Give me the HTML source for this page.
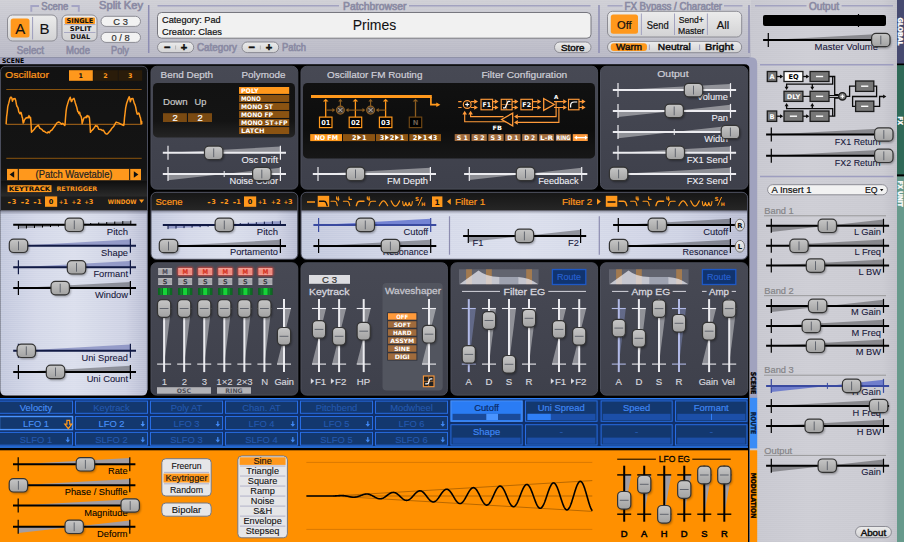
<!DOCTYPE html>
<html lang="en"><head><meta charset="utf-8"><title>Surge - Primes</title>
<style>html,body{margin:0;padding:0;background:#000;overflow:hidden}body{width:904px;height:542px;font-family:"Liberation Sans",sans-serif}svg text{white-space:pre}</style>
</head><body>
<svg width="904" height="542" viewBox="0 0 904 542" style="display:block">
<defs>
<linearGradient id="hg" x1="0" y1="0" x2="0" y2="1"><stop offset="0" stop-color="#c6c6c6"/><stop offset="0.5" stop-color="#b4b4b4"/><stop offset="1" stop-color="#a2a2a2"/></linearGradient>
<linearGradient id="topg" x1="0" y1="0" x2="0" y2="1"><stop offset="0" stop-color="#cfcfd5"/><stop offset="1" stop-color="#b8b8c5"/></linearGradient>
<linearGradient id="pg" x1="0" y1="0" x2="0" y2="1"><stop offset="0" stop-color="#474954"/><stop offset="1" stop-color="#3e404b"/></linearGradient>
<linearGradient id="lg" x1="0" y1="0" x2="1" y2="0"><stop offset="0" stop-color="#c2c8dd"/><stop offset="0.25" stop-color="#d3d7e8"/><stop offset="0.5" stop-color="#dadeec"/><stop offset="0.85" stop-color="#cdd1e3"/><stop offset="1" stop-color="#b8bcd2"/></linearGradient>
<linearGradient id="btn" x1="0" y1="0" x2="0" y2="1"><stop offset="0" stop-color="#ececec"/><stop offset="1" stop-color="#d2d2d4"/></linearGradient>
<linearGradient id="disp" x1="0" y1="0" x2="0" y2="1"><stop offset="0" stop-color="#121212"/><stop offset="0.7" stop-color="#141414"/><stop offset="1" stop-color="#242424"/></linearGradient>
<linearGradient id="hdr" x1="0" y1="0" x2="0" y2="1"><stop offset="0" stop-color="#161616"/><stop offset="1" stop-color="#262626"/></linearGradient>
<linearGradient id="rp" x1="0" y1="0" x2="1" y2="0"><stop offset="0" stop-color="#c7c7cf"/><stop offset="0.4" stop-color="#cdcdd4"/><stop offset="0.9" stop-color="#cacad1"/><stop offset="1" stop-color="#c0c0c8"/></linearGradient>
<pattern id="stripes" width="4" height="2" patternUnits="userSpaceOnUse"><rect width="4" height="1" fill="rgba(255,255,255,0.10)"/></pattern>
<pattern id="stripes2" width="4" height="2" patternUnits="userSpaceOnUse"><rect width="4" height="1" fill="rgba(255,255,255,0.06)"/></pattern>
<linearGradient id="tbfade" x1="0" y1="0" x2="1" y2="0"><stop offset="0" stop-color="#c4c4ce" stop-opacity="0"/><stop offset="1" stop-color="#c9c9d1" stop-opacity="0"/></linearGradient>
<linearGradient id="hdr2" x1="0" y1="0" x2="0" y2="1"><stop offset="0" stop-color="#0f0f0f"/><stop offset="1" stop-color="#2c2c2c"/></linearGradient>
<linearGradient id="shtop" x1="0" y1="0" x2="0" y2="1"><stop offset="0" stop-color="rgba(0,0,20,0.35)"/><stop offset="1" stop-color="rgba(0,0,20,0)"/></linearGradient>
<linearGradient id="mb" x1="0" y1="0" x2="0" y2="1"><stop offset="0" stop-color="#c4c4c8"/><stop offset="0.3" stop-color="#a6a6ab"/><stop offset="0.75" stop-color="#a6a6ab"/><stop offset="1" stop-color="#bcbcc0"/></linearGradient>
<linearGradient id="mr" x1="0" y1="0" x2="0" y2="1"><stop offset="0" stop-color="#f8b0a6"/><stop offset="0.3" stop-color="#ee8c80"/><stop offset="0.75" stop-color="#ee8c80"/><stop offset="1" stop-color="#f6a69c"/></linearGradient>
<linearGradient id="disp2" x1="0" y1="0" x2="0" y2="1"><stop offset="0" stop-color="#111"/><stop offset="0.6" stop-color="#0d0d0d"/><stop offset="1" stop-color="#171717"/></linearGradient>
<filter id="blur" x="-30%" y="-30%" width="160%" height="160%"><feGaussianBlur stdDeviation="1"/></filter>
<filter id="glow" x="-30%" y="-50%" width="160%" height="200%"><feGaussianBlur stdDeviation="1.2"/></filter>
</defs>
<rect x="0" y="0" width="904" height="542" fill="#000" />
<rect x="749.5" y="0" width="147.5" height="542" fill="url(#rp)" />
<rect x="749.5" y="0" width="147.5" height="542" fill="url(#stripes2)" />
<rect x="0" y="0" width="751" height="57.5" fill="url(#topg)" />
<rect x="0" y="0" width="751" height="57.5" fill="url(#stripes2)" />
<rect x="748" y="0" width="12" height="57.5" fill="url(#tbfade)" />
<path d="M0 57.3 H751 Q757.2 57.3 757.2 63.5 V398 H749.8 V69.8 Q749.8 64.3 744.3 64.3 H0 Z" stroke="none" stroke-width="0" fill="#a0a2be" />
<rect x="897" y="0" width="7" height="542" fill="#000" />
<rect x="897" y="0" width="7" height="63.5" fill="#464a70" />
<rect x="897" y="65.2" width="7" height="109.2" fill="#2f6a58" />
<rect x="897" y="176.4" width="7" height="365.6" fill="#679a8c" />
<text transform="translate(898.1 17.6) rotate(90)" font-size="6.5" fill="#fff" font-family="DejaVu Sans, Liberation Sans, sans-serif" font-weight="bold" stroke="#fff" stroke-width="0.35" textLength="28" lengthAdjust="spacingAndGlyphs">GLOBAL</text>
<text transform="translate(898.1 116.6) rotate(90)" font-size="6.5" fill="#fff" font-family="DejaVu Sans, Liberation Sans, sans-serif" font-weight="bold" stroke="#fff" stroke-width="0.35" textLength="8.2" lengthAdjust="spacingAndGlyphs">FX</text>
<text transform="translate(898.1 180.8) rotate(90)" font-size="6.5" fill="#fff" font-family="DejaVu Sans, Liberation Sans, sans-serif" font-weight="bold" stroke="#fff" stroke-width="0.35" textLength="26" lengthAdjust="spacingAndGlyphs">FX UNIT</text>
<text x="2" y="62.9" font-size="6.5" fill="#000" font-family="DejaVu Sans, Liberation Sans, sans-serif" font-weight="bold" textLength="22.1" lengthAdjust="spacingAndGlyphs" >SCENE</text>
<text transform="translate(751 371.7) rotate(90)" font-size="6.8" fill="#000" font-family="DejaVu Sans, Liberation Sans, sans-serif" font-weight="bold" stroke="#000" stroke-width="0.35" textLength="22.6" lengthAdjust="spacingAndGlyphs">SCENE</text>
<path d="M31.3 11.8 V6 H39" stroke="#a4a4c4" stroke-width="1.9" fill="none" />
<path d="M71.5 6 H78.8 V11.8" stroke="#a4a4c4" stroke-width="1.9" fill="none" />
<text x="41.3" y="9.6" font-size="10.2" fill="#8a8aa3" font-family="Liberation Sans, sans-serif" textLength="27" lengthAdjust="spacingAndGlyphs" stroke="#8a8aa3" stroke-width="0.6" >Scene</text>
<rect x="7.5" y="15" width="49.5" height="26" fill="url(#btn)" rx="5" stroke="#8c8c94" stroke-width="1" />
<rect x="10.7" y="18.4" width="18.8" height="19.2" fill="#ff981c" rx="2.5" />
<line x1="32.6" y1="17" x2="32.6" y2="39.5" stroke="#9c9cbc" stroke-width="1" />
<text x="20.3" y="33.8" font-size="15" fill="#111" font-family="Liberation Sans, sans-serif" text-anchor="middle" stroke="#111" stroke-width="0.1" >A</text>
<text x="44.6" y="33.8" font-size="15" fill="#111" font-family="Liberation Sans, sans-serif" text-anchor="middle" stroke="#111" stroke-width="0.1" >B</text>
<text x="16.7" y="53.7" font-size="10.2" fill="#8a8aa3" font-family="Liberation Sans, sans-serif" textLength="27.3" lengthAdjust="spacingAndGlyphs" stroke="#8a8aa3" stroke-width="0.6" >Select</text>
<rect x="62" y="15" width="35" height="26" fill="url(#btn)" rx="5" stroke="#8c8c94" stroke-width="1" />
<rect x="64.8" y="17.4" width="30.2" height="6.6" fill="#ff981c" rx="1" />
<line x1="64" y1="24.6" x2="95.5" y2="24.6" stroke="#9c9cbc" stroke-width="0.8" />
<line x1="64" y1="32.5" x2="95.5" y2="32.5" stroke="#9c9cbc" stroke-width="0.8" />
<text x="66.6" y="23.3" font-size="6.6" fill="#111" font-family="DejaVu Sans, Liberation Sans, sans-serif" font-weight="bold" textLength="26.6" lengthAdjust="spacingAndGlyphs" >SINGLE</text>
<text x="69.8" y="31.2" font-size="6.6" fill="#111" font-family="DejaVu Sans, Liberation Sans, sans-serif" font-weight="bold" textLength="21.6" lengthAdjust="spacingAndGlyphs" >SPLIT</text>
<text x="70.6" y="39.1" font-size="6.6" fill="#111" font-family="DejaVu Sans, Liberation Sans, sans-serif" font-weight="bold" textLength="19.4" lengthAdjust="spacingAndGlyphs" >DUAL</text>
<text x="66" y="53.7" font-size="10.2" fill="#8a8aa3" font-family="Liberation Sans, sans-serif" textLength="24" lengthAdjust="spacingAndGlyphs" stroke="#8a8aa3" stroke-width="0.6" >Mode</text>
<text x="99" y="9.4" font-size="10.2" fill="#8a8aa3" font-family="Liberation Sans, sans-serif" textLength="44" lengthAdjust="spacingAndGlyphs" stroke="#8a8aa3" stroke-width="0.6" >Split Key</text>
<rect x="101" y="16.3" width="39.5" height="10.1" fill="#f2f2f2" rx="5.05" stroke="#8c8c94" stroke-width="1" />
<rect x="101" y="32.4" width="39.5" height="10" fill="#f2f2f2" rx="5" stroke="#8c8c94" stroke-width="1" />
<text x="120.6" y="24.6" font-size="9.3" fill="#333" font-family="Liberation Sans, sans-serif" text-anchor="middle" stroke="#333" stroke-width="0.2" >C 3</text>
<text x="120.6" y="40.7" font-size="9.3" fill="#333" font-family="Liberation Sans, sans-serif" text-anchor="middle" stroke="#333" stroke-width="0.2" >0 / 8</text>
<text x="111" y="53.7" font-size="10.2" fill="#8a8aa3" font-family="Liberation Sans, sans-serif" textLength="18" lengthAdjust="spacingAndGlyphs" stroke="#8a8aa3" stroke-width="0.6" >Poly</text>
<line x1="148.7" y1="5" x2="148.7" y2="53" stroke="#8c8cb2" stroke-width="1.5" />
<line x1="157.5" y1="5.8" x2="339" y2="5.8" stroke="#a2a2c0" stroke-width="1.4" />
<line x1="409" y1="5.8" x2="590.5" y2="5.8" stroke="#a2a2c0" stroke-width="1.4" />
<text x="343" y="9.7" font-size="10" fill="#8a8aa3" font-family="Liberation Sans, sans-serif" textLength="63.5" lengthAdjust="spacingAndGlyphs" stroke="#8a8aa3" stroke-width="0.6" >Patchbrowser</text>
<rect x="157.5" y="12.5" width="433.5" height="25.7" fill="#f1f1f1" rx="4" stroke="#77777f" stroke-width="1" />
<text x="162" y="22.6" font-size="9.3" fill="#111" font-family="Liberation Sans, sans-serif" textLength="58.7" lengthAdjust="spacingAndGlyphs" stroke="#111" stroke-width="0.2" >Category: Pad</text>
<text x="162" y="34.6" font-size="9.3" fill="#111" font-family="Liberation Sans, sans-serif" textLength="60" lengthAdjust="spacingAndGlyphs" stroke="#111" stroke-width="0.2" >Creator: Claes</text>
<text x="374.5" y="30.3" font-size="14" fill="#111" font-family="Liberation Sans, sans-serif" text-anchor="middle" textLength="43.5" lengthAdjust="spacingAndGlyphs" stroke="#111" stroke-width="0.08" >Primes</text>
<rect x="157.5" y="42" width="36.2" height="10.6" fill="url(#btn)" rx="5.3" stroke="#8c8c94" stroke-width="1" />
<text x="167.2" y="51.1" font-size="11" fill="#111" font-family="Liberation Sans, sans-serif" text-anchor="middle" font-weight="bold" stroke="#111" stroke-width="0.5">−</text>
<text x="183.9" y="51.2" font-size="11" fill="#111" font-family="Liberation Sans, sans-serif" text-anchor="middle" font-weight="bold" stroke="#111" stroke-width="0.5">+</text>
<line x1="175.6" y1="45.5" x2="175.6" y2="49.5" stroke="#aaa" stroke-width="0.8" />
<text x="197" y="51.3" font-size="10" fill="#8a8aa3" font-family="Liberation Sans, sans-serif" textLength="40" lengthAdjust="spacingAndGlyphs" stroke="#8a8aa3" stroke-width="0.6" >Category</text>
<rect x="242" y="42" width="36.7" height="10.6" fill="url(#btn)" rx="5.3" stroke="#8c8c94" stroke-width="1" />
<text x="251.7" y="51.1" font-size="11" fill="#111" font-family="Liberation Sans, sans-serif" text-anchor="middle" font-weight="bold" stroke="#111" stroke-width="0.5">−</text>
<text x="268.9" y="51.2" font-size="11" fill="#111" font-family="Liberation Sans, sans-serif" text-anchor="middle" font-weight="bold" stroke="#111" stroke-width="0.5">+</text>
<line x1="260.35" y1="45.5" x2="260.35" y2="49.5" stroke="#aaa" stroke-width="0.8" />
<text x="282" y="51.3" font-size="10" fill="#8a8aa3" font-family="Liberation Sans, sans-serif" textLength="24" lengthAdjust="spacingAndGlyphs" stroke="#8a8aa3" stroke-width="0.6" >Patch</text>
<rect x="554.5" y="42" width="36.5" height="10.6" fill="url(#btn)" rx="5.3" stroke="#8c8c94" stroke-width="1" />
<text x="572.8" y="50.9" font-size="9.6" fill="#111" font-family="Liberation Sans, sans-serif" text-anchor="middle" textLength="23.5" lengthAdjust="spacingAndGlyphs" stroke="#111" stroke-width="0.45" >Store</text>
<line x1="599" y1="5" x2="599" y2="53" stroke="#8c8cb2" stroke-width="1.5" />
<line x1="607.5" y1="5.8" x2="622.6" y2="5.8" stroke="#a2a2c0" stroke-width="1.4" />
<line x1="724" y1="5.8" x2="742.5" y2="5.8" stroke="#a2a2c0" stroke-width="1.4" />
<text x="624.5" y="9.7" font-size="10" fill="#8a8aa3" font-family="Liberation Sans, sans-serif" textLength="97.5" lengthAdjust="spacingAndGlyphs" stroke="#8a8aa3" stroke-width="0.6" >FX Bypass / Character</text>
<rect x="607.5" y="11.3" width="134.2" height="25.7" fill="url(#btn)" rx="5" stroke="#8c8c94" stroke-width="1" />
<rect x="610.8" y="14.5" width="27.2" height="19.3" fill="#ff981c" rx="2.5" />
<line x1="641.4" y1="13.5" x2="641.4" y2="35" stroke="#9c9cbc" stroke-width="0.9" />
<line x1="674.5" y1="13.5" x2="674.5" y2="35" stroke="#9c9cbc" stroke-width="0.9" />
<line x1="707.4" y1="13.5" x2="707.4" y2="35" stroke="#9c9cbc" stroke-width="0.9" />
<text x="624.3" y="28.6" font-size="11.2" fill="#111" font-family="Liberation Sans, sans-serif" text-anchor="middle" stroke="#111" stroke-width="0.2" >Off</text>
<text x="657.8" y="28.6" font-size="11" fill="#111" font-family="Liberation Sans, sans-serif" text-anchor="middle" textLength="22" lengthAdjust="spacingAndGlyphs" stroke="#111" stroke-width="0.2" >Send</text>
<text x="691.2" y="22.8" font-size="9.2" fill="#111" font-family="Liberation Sans, sans-serif" text-anchor="middle" textLength="25" lengthAdjust="spacingAndGlyphs" stroke="#111" stroke-width="0.2" >Send+</text>
<text x="691.2" y="33.8" font-size="9.2" fill="#111" font-family="Liberation Sans, sans-serif" text-anchor="middle" textLength="26.5" lengthAdjust="spacingAndGlyphs" stroke="#111" stroke-width="0.2" >Master</text>
<text x="723" y="28.6" font-size="11.2" fill="#111" font-family="Liberation Sans, sans-serif" text-anchor="middle" stroke="#111" stroke-width="0.2" >All</text>
<rect x="607.5" y="41.4" width="134.2" height="11.3" fill="url(#btn)" rx="5.65" stroke="#8c8c94" stroke-width="1" />
<rect x="610.8" y="43.2" width="36.2" height="7.8" fill="#ff981c" rx="3" />
<line x1="649.4" y1="44.5" x2="649.4" y2="50" stroke="#9c9cbc" stroke-width="0.9" />
<line x1="699.6" y1="44.5" x2="699.6" y2="50" stroke="#9c9cbc" stroke-width="0.9" />
<text x="629" y="50.4" font-size="9.8" fill="#111" font-family="Liberation Sans, sans-serif" text-anchor="middle" textLength="26" lengthAdjust="spacingAndGlyphs" stroke="#111" stroke-width="0.45" >Warm</text>
<text x="674.3" y="50.4" font-size="9.8" fill="#111" font-family="Liberation Sans, sans-serif" text-anchor="middle" textLength="33" lengthAdjust="spacingAndGlyphs" stroke="#111" stroke-width="0.45" >Neutral</text>
<text x="719.3" y="50.4" font-size="9.8" fill="#111" font-family="Liberation Sans, sans-serif" text-anchor="middle" textLength="28.5" lengthAdjust="spacingAndGlyphs" stroke="#111" stroke-width="0.45" >Bright</text>
<line x1="749" y1="5" x2="749" y2="53" stroke="#8c8cb2" stroke-width="1.5" />
<line x1="755" y1="5.8" x2="806.5" y2="5.8" stroke="#a2a2c0" stroke-width="1.4" />
<line x1="841.6" y1="5.8" x2="893" y2="5.8" stroke="#a2a2c0" stroke-width="1.4" />
<text x="809" y="9.7" font-size="10" fill="#8a8aa3" font-family="Liberation Sans, sans-serif" textLength="30" lengthAdjust="spacingAndGlyphs" stroke="#8a8aa3" stroke-width="0.6" >Output</text>
<rect x="763" y="15" width="123" height="11" fill="#000" rx="2" />
<line x1="858.5" y1="14" x2="858.5" y2="27" stroke="#000" stroke-width="1.2" />
<polygon points="768.3,40 884,33.8 884,40" fill="rgba(0,0,0,0.33)" />
<line x1="763.1" y1="40" x2="889.6" y2="40" stroke="#000" stroke-width="2" />
<line x1="768.3" y1="33" x2="768.3" y2="47" stroke="#000" stroke-width="1.2" />
<text x="878" y="50" font-size="9.3" fill="#16163a" font-family="Liberation Sans, sans-serif" text-anchor="end" textLength="63.5" lengthAdjust="spacingAndGlyphs" stroke="#16163a" stroke-width="0.08" >Master Volume</text>
<rect x="872.8" y="34.9" width="18.4" height="13.4" fill="rgba(0,0,0,0.35)" rx="4.5" filter="url(#blur)"/>
<rect x="871.6" y="33.3" width="18.4" height="13.4" fill="url(#hg)" rx="4.3" stroke="#333" stroke-width="1.2" />
<line x1="880.8" y1="35.6" x2="880.8" y2="44.4" stroke="#585c66" stroke-width="0.9" />
<line x1="760" y1="64.7" x2="893.5" y2="64.7" stroke="#9e9ec0" stroke-width="1.5" />
<line x1="776.7" y1="76.5" x2="782" y2="76.5" stroke="#0a0a0a" stroke-width="1.3" />
<polygon points="783.2,76.5 780,74.5 780,78.5" fill="#0a0a0a" />
<line x1="802.9" y1="76.5" x2="808.1" y2="76.5" stroke="#0a0a0a" stroke-width="1.3" />
<polygon points="809.3,76.5 806.1,74.5 806.1,78.5" fill="#0a0a0a" />
<line x1="776.7" y1="116.2" x2="782" y2="116.2" stroke="#0a0a0a" stroke-width="1.3" />
<polygon points="783.2,116.2 780,114.2 780,118.2" fill="#0a0a0a" />
<line x1="802.9" y1="116.2" x2="808.1" y2="116.2" stroke="#0a0a0a" stroke-width="1.3" />
<polygon points="809.3,116.2 806.1,114.2 806.1,118.2" fill="#0a0a0a" />
<line x1="802.9" y1="96.35" x2="810.1" y2="96.35" stroke="#0a0a0a" stroke-width="1.2" />
<path d="M829 76.5 H834.7 V94.6 H838.8 M829 116.2 H834.7 V98.2 H838.8" stroke="#0a0a0a" stroke-width="1.3" fill="none" />
<line x1="829" y1="95.5" x2="838.8" y2="95.5" stroke="#0a0a0a" stroke-width="1" />
<line x1="829" y1="97.4" x2="838.8" y2="97.4" stroke="#0a0a0a" stroke-width="1" />
<path d="M832.7 76.5 V84.2 H786.6 V87 M812.3 84.2 V87" stroke="#0a0a0a" stroke-width="1.3" fill="none" />
<polygon points="786.6,90 784.6,86.8 788.6,86.8" fill="#0a0a0a" />
<polygon points="812.3,90 810.3,86.8 814.3,86.8" fill="#0a0a0a" />
<path d="M832.7 116.2 V108.6 H786.6 V106 M812.3 108.6 V106" stroke="#0a0a0a" stroke-width="1.3" fill="none" />
<polygon points="786.6,103 784.6,106.2 788.6,106.2" fill="#0a0a0a" />
<polygon points="812.3,103 810.3,106.2 814.3,106.2" fill="#0a0a0a" />
<path d="M846 96.3 H849.6 V86.2 H855.6 M873.8 86.2 H876.6 V96.5 H852.6 V106.3 H855.6 M873.8 106.3 H879.6 V96.5 H883.5" stroke="#0a0a0a" stroke-width="1.3" fill="none" />
<polygon points="886.3,96.5 883.1,94.5 883.1,98.5" fill="#0a0a0a" />
<circle cx="842.4" cy="96.3" r="3.7" fill="#7c7c7c" stroke="#1a1a1a" stroke-width="1.3"/>
<line x1="840.5" y1="96.3" x2="844.3" y2="96.3" stroke="#fff" stroke-width="1.1" />
<line x1="842.4" y1="94.4" x2="842.4" y2="98.2" stroke="#fff" stroke-width="1.1" />
<rect x="767.3" y="71.5" width="9.4" height="10" fill="#777" stroke="#1c1c1c" stroke-width="1.3" />
<text x="772" y="79" font-size="6.6" fill="#fff" font-family="DejaVu Sans, Liberation Sans, sans-serif" text-anchor="middle" font-weight="bold" >A</text>
<rect x="784" y="71.5" width="18.9" height="10" fill="#fff" stroke="#1c1c1c" stroke-width="1.3" />
<text x="793.45" y="79" font-size="6.6" fill="#000" font-family="DejaVu Sans, Liberation Sans, sans-serif" text-anchor="middle" font-weight="bold" >EQ</text>
<rect x="810.1" y="71.5" width="18.9" height="10" fill="#777" stroke="#1c1c1c" stroke-width="1.3" />
<rect x="815.95" y="75.8" width="7.2" height="1.4" fill="#fff" />
<rect x="784" y="91.3" width="18.9" height="10.1" fill="#777" stroke="#1c1c1c" stroke-width="1.3" />
<text x="793.45" y="98.85" font-size="6.6" fill="#fff" font-family="DejaVu Sans, Liberation Sans, sans-serif" text-anchor="middle" font-weight="bold" >DLY</text>
<rect x="810.1" y="91.3" width="18.9" height="10.1" fill="#777" stroke="#1c1c1c" stroke-width="1.3" />
<rect x="815.95" y="95.65" width="7.2" height="1.4" fill="#fff" />
<rect x="767.3" y="111" width="9.4" height="10.4" fill="#777" stroke="#1c1c1c" stroke-width="1.3" />
<text x="772" y="118.7" font-size="6.6" fill="#fff" font-family="DejaVu Sans, Liberation Sans, sans-serif" text-anchor="middle" font-weight="bold" >B</text>
<rect x="784" y="111" width="18.9" height="10.4" fill="#777" stroke="#1c1c1c" stroke-width="1.3" />
<rect x="789.85" y="115.5" width="7.2" height="1.4" fill="#fff" />
<rect x="810.1" y="111" width="18.9" height="10.4" fill="#777" stroke="#1c1c1c" stroke-width="1.3" />
<rect x="815.95" y="115.5" width="7.2" height="1.4" fill="#fff" />
<rect x="855.6" y="81" width="18.2" height="10.4" fill="#777" stroke="#1c1c1c" stroke-width="1.3" />
<rect x="861.1" y="85.5" width="7.2" height="1.4" fill="#fff" />
<rect x="855.6" y="101.1" width="18.2" height="10.4" fill="#777" stroke="#1c1c1c" stroke-width="1.3" />
<rect x="861.1" y="105.6" width="7.2" height="1.4" fill="#fff" />
<polygon points="771.3,134.5 887,128.3 887,134.5" fill="rgba(0,0,0,0.33)" />
<line x1="766.1" y1="134.5" x2="892.6" y2="134.5" stroke="#000" stroke-width="2" />
<line x1="771.3" y1="127.5" x2="771.3" y2="141.5" stroke="#000" stroke-width="1.2" />
<text x="880.4" y="145" font-size="9.3" fill="#16163a" font-family="Liberation Sans, sans-serif" text-anchor="end" textLength="45.6" lengthAdjust="spacingAndGlyphs" stroke="#16163a" stroke-width="0.08" >FX1 Return</text>
<rect x="875.8" y="129.4" width="18.4" height="13.4" fill="rgba(0,0,0,0.35)" rx="4.5" filter="url(#blur)"/>
<rect x="874.6" y="127.8" width="18.4" height="13.4" fill="url(#hg)" rx="4.3" stroke="#333" stroke-width="1.2" />
<line x1="883.8" y1="130.1" x2="883.8" y2="138.9" stroke="#585c66" stroke-width="0.9" />
<polygon points="771.3,155.8 887,149.6 887,155.8" fill="rgba(0,0,0,0.33)" />
<line x1="766.1" y1="155.8" x2="892.6" y2="155.8" stroke="#000" stroke-width="2" />
<line x1="771.3" y1="148.8" x2="771.3" y2="162.8" stroke="#000" stroke-width="1.2" />
<text x="880.4" y="166.4" font-size="9.3" fill="#16163a" font-family="Liberation Sans, sans-serif" text-anchor="end" textLength="45.6" lengthAdjust="spacingAndGlyphs" stroke="#16163a" stroke-width="0.08" >FX2 Return</text>
<rect x="875.8" y="150.7" width="18.4" height="13.4" fill="rgba(0,0,0,0.35)" rx="4.5" filter="url(#blur)"/>
<rect x="874.6" y="149.1" width="18.4" height="13.4" fill="url(#hg)" rx="4.3" stroke="#333" stroke-width="1.2" />
<line x1="883.8" y1="151.4" x2="883.8" y2="160.2" stroke="#585c66" stroke-width="0.9" />
<line x1="760" y1="176.4" x2="893.5" y2="176.4" stroke="#9e9ec0" stroke-width="1.5" />
<rect x="767.6" y="184.7" width="119.8" height="10.1" fill="#f2f2f2" rx="5.05" stroke="#8c8c94" stroke-width="1" />
<text x="771.5" y="192.8" font-size="9.6" fill="#111" font-family="Liberation Sans, sans-serif" textLength="40" lengthAdjust="spacingAndGlyphs" stroke="#111" stroke-width="0.2" >A Insert 1</text>
<text x="865" y="192.8" font-size="9.6" fill="#111" font-family="Liberation Sans, sans-serif" textLength="12.6" lengthAdjust="spacingAndGlyphs" stroke="#111" stroke-width="0.2" >EQ</text>
<polygon points="880,189 883.4,189 881.7,191.2" fill="#111" />
<text x="764.3" y="213.9" font-size="9.3" fill="#858588" font-family="Liberation Sans, sans-serif" stroke="#858588" stroke-width="0.2" >Band 1</text>
<line x1="764" y1="215.8" x2="886" y2="215.8" stroke="#8a8a8a" stroke-width="0.8" />
<text x="764.3" y="293.8" font-size="9.3" fill="#858588" font-family="Liberation Sans, sans-serif" stroke="#858588" stroke-width="0.2" >Band 2</text>
<line x1="764" y1="295.7" x2="886" y2="295.7" stroke="#8a8a8a" stroke-width="0.8" />
<text x="764.3" y="373.3" font-size="9.3" fill="#858588" font-family="Liberation Sans, sans-serif" stroke="#858588" stroke-width="0.2" >Band 3</text>
<line x1="764" y1="375.2" x2="886" y2="375.2" stroke="#8a8a8a" stroke-width="0.8" />
<text x="764.3" y="453.5" font-size="9.3" fill="#858588" font-family="Liberation Sans, sans-serif" stroke="#858588" stroke-width="0.2" >Output</text>
<line x1="764" y1="455.4" x2="886" y2="455.4" stroke="#8a8a8a" stroke-width="0.8" />
<polygon points="771.3,225.8 771.3,232 827.4,225.8" fill="rgba(0,0,0,0.33)" />
<polygon points="827.4,225.8 883.5,219.6 883.5,225.8" fill="rgba(0,0,0,0.33)" />
<line x1="766.1" y1="225.8" x2="889.1" y2="225.8" stroke="#000" stroke-width="2" />
<line x1="771.3" y1="218.8" x2="771.3" y2="232.8" stroke="#000" stroke-width="1.2" />
<line x1="883.5" y1="218.8" x2="883.5" y2="232.8" stroke="#000" stroke-width="1.2" />
<text x="881" y="235.3" font-size="9.3" fill="#16163a" font-family="Liberation Sans, sans-serif" text-anchor="end" stroke="#16163a" stroke-width="0.08" >L Gain</text>
<rect x="819.3" y="220.7" width="18.4" height="13.4" fill="rgba(0,0,0,0.35)" rx="4.5" filter="url(#blur)"/>
<rect x="818.1" y="219.1" width="18.4" height="13.4" fill="url(#hg)" rx="4.3" stroke="#333" stroke-width="1.2" />
<line x1="827.3" y1="221.4" x2="827.3" y2="230.2" stroke="#585c66" stroke-width="0.9" />
<polygon points="771.3,245.8 883.5,239.6 883.5,245.8" fill="rgba(0,0,0,0.33)" />
<line x1="766.1" y1="245.8" x2="889.1" y2="245.8" stroke="#000" stroke-width="2" />
<line x1="771.3" y1="238.8" x2="771.3" y2="252.8" stroke="#000" stroke-width="1.2" />
<line x1="883.5" y1="238.8" x2="883.5" y2="252.8" stroke="#000" stroke-width="1.2" />
<text x="881" y="255.3" font-size="9.3" fill="#16163a" font-family="Liberation Sans, sans-serif" text-anchor="end" stroke="#16163a" stroke-width="0.08" >L Freq</text>
<rect x="791" y="240.7" width="18.4" height="13.4" fill="rgba(0,0,0,0.35)" rx="4.5" filter="url(#blur)"/>
<rect x="789.8" y="239.1" width="18.4" height="13.4" fill="url(#hg)" rx="4.3" stroke="#333" stroke-width="1.2" />
<line x1="799" y1="241.4" x2="799" y2="250.2" stroke="#585c66" stroke-width="0.9" />
<polygon points="771.3,265.6 883.5,259.4 883.5,265.6" fill="rgba(0,0,0,0.33)" />
<line x1="766.1" y1="265.6" x2="889.1" y2="265.6" stroke="#000" stroke-width="2" />
<line x1="771.3" y1="258.6" x2="771.3" y2="272.6" stroke="#000" stroke-width="1.2" />
<line x1="883.5" y1="258.6" x2="883.5" y2="272.6" stroke="#000" stroke-width="1.2" />
<text x="881" y="275.1" font-size="9.3" fill="#16163a" font-family="Liberation Sans, sans-serif" text-anchor="end" stroke="#16163a" stroke-width="0.08" >L BW</text>
<rect x="807.5" y="260.5" width="18.4" height="13.4" fill="rgba(0,0,0,0.35)" rx="4.5" filter="url(#blur)"/>
<rect x="806.3" y="258.9" width="18.4" height="13.4" fill="url(#hg)" rx="4.3" stroke="#333" stroke-width="1.2" />
<line x1="815.5" y1="261.2" x2="815.5" y2="270" stroke="#585c66" stroke-width="0.9" />
<polygon points="771.3,305.9 771.3,312.1 827.4,305.9" fill="rgba(0,0,0,0.33)" />
<polygon points="827.4,305.9 883.5,299.7 883.5,305.9" fill="rgba(0,0,0,0.33)" />
<line x1="766.1" y1="305.9" x2="889.1" y2="305.9" stroke="#000" stroke-width="2" />
<line x1="771.3" y1="298.9" x2="771.3" y2="312.9" stroke="#000" stroke-width="1.2" />
<line x1="883.5" y1="298.9" x2="883.5" y2="312.9" stroke="#000" stroke-width="1.2" />
<text x="881" y="315.4" font-size="9.3" fill="#16163a" font-family="Liberation Sans, sans-serif" text-anchor="end" stroke="#16163a" stroke-width="0.08" >M Gain</text>
<rect x="809.6" y="300.8" width="18.4" height="13.4" fill="rgba(0,0,0,0.35)" rx="4.5" filter="url(#blur)"/>
<rect x="808.4" y="299.2" width="18.4" height="13.4" fill="url(#hg)" rx="4.3" stroke="#333" stroke-width="1.2" />
<line x1="817.6" y1="301.5" x2="817.6" y2="310.3" stroke="#585c66" stroke-width="0.9" />
<polygon points="771.3,326 883.5,319.8 883.5,326" fill="rgba(0,0,0,0.33)" />
<line x1="766.1" y1="326" x2="889.1" y2="326" stroke="#000" stroke-width="2" />
<line x1="771.3" y1="319" x2="771.3" y2="333" stroke="#000" stroke-width="1.2" />
<line x1="883.5" y1="319" x2="883.5" y2="333" stroke="#000" stroke-width="1.2" />
<text x="881" y="335.5" font-size="9.3" fill="#16163a" font-family="Liberation Sans, sans-serif" text-anchor="end" stroke="#16163a" stroke-width="0.08" >M Freq</text>
<rect x="803.3" y="320.9" width="18.4" height="13.4" fill="rgba(0,0,0,0.35)" rx="4.5" filter="url(#blur)"/>
<rect x="802.1" y="319.3" width="18.4" height="13.4" fill="url(#hg)" rx="4.3" stroke="#333" stroke-width="1.2" />
<line x1="811.3" y1="321.6" x2="811.3" y2="330.4" stroke="#585c66" stroke-width="0.9" />
<polygon points="771.3,345.8 883.5,339.6 883.5,345.8" fill="rgba(0,0,0,0.33)" />
<line x1="766.1" y1="345.8" x2="889.1" y2="345.8" stroke="#000" stroke-width="2" />
<line x1="771.3" y1="338.8" x2="771.3" y2="352.8" stroke="#000" stroke-width="1.2" />
<line x1="883.5" y1="338.8" x2="883.5" y2="352.8" stroke="#000" stroke-width="1.2" />
<text x="881" y="355.3" font-size="9.3" fill="#16163a" font-family="Liberation Sans, sans-serif" text-anchor="end" stroke="#16163a" stroke-width="0.08" >M BW</text>
<rect x="807.5" y="340.7" width="18.4" height="13.4" fill="rgba(0,0,0,0.35)" rx="4.5" filter="url(#blur)"/>
<rect x="806.3" y="339.1" width="18.4" height="13.4" fill="url(#hg)" rx="4.3" stroke="#333" stroke-width="1.2" />
<line x1="815.5" y1="341.4" x2="815.5" y2="350.2" stroke="#585c66" stroke-width="0.9" />
<polygon points="771.3,385.9 771.3,392.1 827.4,385.9" fill="rgba(70,90,200,0.68)" />
<polygon points="827.4,385.9 883.5,379.7 883.5,385.9" fill="rgba(70,90,200,0.68)" />
<line x1="766.1" y1="385.9" x2="889.1" y2="385.9" stroke="#3a4aa0" stroke-width="2" />
<line x1="771.3" y1="378.9" x2="771.3" y2="392.9" stroke="#3a4aa0" stroke-width="1.2" />
<line x1="883.5" y1="378.9" x2="883.5" y2="392.9" stroke="#3a4aa0" stroke-width="1.2" />
<line x1="827.4" y1="382.9" x2="827.4" y2="388.9" stroke="#3a4aa0" stroke-width="1" />
<text x="881" y="395.4" font-size="9.3" fill="#16163a" font-family="Liberation Sans, sans-serif" text-anchor="end" stroke="#16163a" stroke-width="0.08" >H Gain</text>
<rect x="843.6" y="380.8" width="18.4" height="13.4" fill="rgba(0,0,0,0.35)" rx="4.5" filter="url(#blur)"/>
<rect x="842.4" y="379.2" width="18.4" height="13.4" fill="url(#hg)" rx="4.3" stroke="#333" stroke-width="1.2" />
<line x1="851.6" y1="381.5" x2="851.6" y2="390.3" stroke="#585c66" stroke-width="0.9" />
<polygon points="771.3,406 883.5,399.8 883.5,406" fill="rgba(0,0,0,0.33)" />
<line x1="766.1" y1="406" x2="889.1" y2="406" stroke="#000" stroke-width="2" />
<line x1="771.3" y1="399" x2="771.3" y2="413" stroke="#000" stroke-width="1.2" />
<line x1="883.5" y1="399" x2="883.5" y2="413" stroke="#000" stroke-width="1.2" />
<text x="881" y="415.5" font-size="9.3" fill="#16163a" font-family="Liberation Sans, sans-serif" text-anchor="end" stroke="#16163a" stroke-width="0.08" >H Freq</text>
<rect x="870.6" y="400.9" width="18.4" height="13.4" fill="rgba(0,0,0,0.35)" rx="4.5" filter="url(#blur)"/>
<rect x="869.4" y="399.3" width="18.4" height="13.4" fill="url(#hg)" rx="4.3" stroke="#333" stroke-width="1.2" />
<line x1="878.6" y1="401.6" x2="878.6" y2="410.4" stroke="#585c66" stroke-width="0.9" />
<polygon points="771.3,425.9 883.5,419.7 883.5,425.9" fill="rgba(0,0,0,0.33)" />
<line x1="766.1" y1="425.9" x2="889.1" y2="425.9" stroke="#000" stroke-width="2" />
<line x1="771.3" y1="418.9" x2="771.3" y2="432.9" stroke="#000" stroke-width="1.2" />
<line x1="883.5" y1="418.9" x2="883.5" y2="432.9" stroke="#000" stroke-width="1.2" />
<text x="881" y="435.4" font-size="9.3" fill="#16163a" font-family="Liberation Sans, sans-serif" text-anchor="end" stroke="#16163a" stroke-width="0.08" >H BW</text>
<rect x="806.2" y="420.8" width="18.4" height="13.4" fill="rgba(0,0,0,0.35)" rx="4.5" filter="url(#blur)"/>
<rect x="805" y="419.2" width="18.4" height="13.4" fill="url(#hg)" rx="4.3" stroke="#333" stroke-width="1.2" />
<line x1="814.2" y1="421.5" x2="814.2" y2="430.3" stroke="#585c66" stroke-width="0.9" />
<polygon points="771.3,465.7 771.3,471.9 827.4,465.7" fill="rgba(0,0,0,0.33)" />
<polygon points="827.4,465.7 883.5,459.5 883.5,465.7" fill="rgba(0,0,0,0.33)" />
<line x1="766.1" y1="465.7" x2="889.1" y2="465.7" stroke="#000" stroke-width="2" />
<line x1="771.3" y1="458.7" x2="771.3" y2="472.7" stroke="#000" stroke-width="1.2" />
<line x1="883.5" y1="458.7" x2="883.5" y2="472.7" stroke="#000" stroke-width="1.2" />
<text x="881" y="475.2" font-size="9.3" fill="#16163a" font-family="Liberation Sans, sans-serif" text-anchor="end" stroke="#16163a" stroke-width="0.08" >Gain</text>
<rect x="819.3" y="460.6" width="18.4" height="13.4" fill="rgba(0,0,0,0.35)" rx="4.5" filter="url(#blur)"/>
<rect x="818.1" y="459" width="18.4" height="13.4" fill="url(#hg)" rx="4.3" stroke="#333" stroke-width="1.2" />
<line x1="827.3" y1="461.3" x2="827.3" y2="470.1" stroke="#585c66" stroke-width="0.9" />
<rect x="855.5" y="526.5" width="35.9" height="11.2" fill="url(#btn)" rx="5.6" stroke="#8c8c94" stroke-width="1" />
<text x="873.4" y="535.6" font-size="9.6" fill="#111" font-family="Liberation Sans, sans-serif" text-anchor="middle" textLength="25.5" lengthAdjust="spacingAndGlyphs" stroke="#111" stroke-width="0.45" >About</text>
<rect x="0.3" y="66" width="147.2" height="329.6" fill="#101010" rx="5.5" />
<path d="M0.3 71.5 Q0.3 66 5.8 66 H142 Q147.5 66 147.5 71.5 V210.5 H0.3 Z" stroke="none" stroke-width="0" fill="url(#disp)" />
<rect x="0.3" y="181" width="147" height="16" fill="url(#hdr2)" />
<rect x="0.3" y="196.5" width="147" height="14.2" fill="#1c1c1c" />
<path d="M0.3 210.6 H147.3 V390 Q147.3 395.5 141.8 395.5 H5.8 Q0.3 395.5 0.3 390 Z" stroke="none" stroke-width="0" fill="url(#lg)" />
<path d="M0.3 210.6 H147.3 V390 Q147.3 395.5 141.8 395.5 H5.8 Q0.3 395.5 0.3 390 Z" stroke="none" stroke-width="0" fill="url(#stripes)" />
<rect x="0.3" y="210.6" width="147" height="4" fill="url(#shtop)" />
<path d="M0.5 210.6 V71.8 Q0.5 66.3 6 66.3 H142 Q147.5 66.3 147.5 71.8 V210.6" stroke="#4a4d5c" stroke-width="1" fill="none" />
<line x1="147.2" y1="210.6" x2="147.2" y2="390" stroke="#8a8ea8" stroke-width="0.8" />
<text x="5" y="78.1" font-size="9.6" fill="#ff981c" font-family="Liberation Sans, sans-serif" textLength="44" lengthAdjust="spacingAndGlyphs" stroke="#ff981c" stroke-width="0.2" >Oscillator</text>
<rect x="69" y="70.2" width="23.8" height="10.6" fill="#ff981c" />
<rect x="93.3" y="70.2" width="24.6" height="10.6" fill="#2a1c0a" />
<rect x="118.4" y="70.2" width="23.8" height="10.6" fill="#2a1c0a" />
<text x="80.8" y="78.2" font-size="6.4" fill="#111" font-family="DejaVu Sans, Liberation Sans, sans-serif" text-anchor="middle" font-weight="bold" >1</text>
<text x="105.6" y="78.2" font-size="6.4" fill="#ff981c" font-family="DejaVu Sans, Liberation Sans, sans-serif" text-anchor="middle" font-weight="bold" >2</text>
<text x="130.2" y="78.2" font-size="6.4" fill="#ff981c" font-family="DejaVu Sans, Liberation Sans, sans-serif" text-anchor="middle" font-weight="bold" >3</text>
<line x1="6.3" y1="89.5" x2="141.7" y2="89.5" stroke="#a8640e" stroke-width="0.8" />
<line x1="6.3" y1="158.3" x2="141.7" y2="158.3" stroke="#a8640e" stroke-width="0.8" />
<line x1="6.3" y1="124.3" x2="141.7" y2="124.3" stroke="#d8801a" stroke-width="0.8" />
<polyline points="6.1,124.3 6.6,116.92 7.18,112.58 7.76,106.62 8.75,103.14 9.75,99.14 10.49,97.31 11.24,97.17 11.82,98.19 12.4,101.14 13.4,98.73 14.23,98.93 15.06,98.56 15.72,100.48 16.38,104.24 17.05,106.49 17.71,107.25 18.21,108.71 18.7,111.59 19.86,113.74 20.28,113.71 20.69,112.35 21.19,112.88 21.69,114.89 22.1,117.22 22.52,117.9 22.85,120.79 23.18,123.07 23.76,122.24 24.34,120.1 25.01,119.19 25.67,118.2 27.33,117.49 28.16,117.92 28.99,115.64 29.73,117.67 30.48,117.34 30.81,120.45 31.14,125.69 31.47,132.2 32.63,131 34.29,129.24 35.54,127.34 36.78,126.27 38.44,125.26 39.77,128.16 41.76,129.31 43.41,131.22 44.41,131.13 45.4,132.33 46.32,132.66 47.23,132.95 48.22,131.78 49.22,132.8 50.46,130.77 51.71,130.28 54.19,126.86 55.02,125.75 55.85,124.34 57.18,122.65 58.34,122.09 59.5,122.28 61.66,124.11 62.73,123.29 63.81,124.42 64.31,125.09 64.81,125.46 65.06,124.3 65.55,117.29 66.13,110.9 66.71,107.1 67.71,103.66 68.7,100.39 70.2,97.29 71.36,101.49 71.85,101.29 72.35,99.65 74.01,98.35 74.67,100.49 75.34,103.01 76.66,106.94 77.16,108.95 77.66,111.39 78.24,111.86 78.82,113.48 79.23,112.32 79.65,112.33 80.15,114.99 80.64,115.67 81.06,116.11 81.47,117.78 81.8,119.59 82.14,123.63 83.3,119.77 83.96,117.92 84.62,117.61 85.45,117.05 86.28,117.63 87.11,115.43 87.94,116.8 88.69,116.08 89.43,117.89 89.77,121.72 90.1,126.13 90.43,132.37 91.01,131.33 91.59,130.8 93.25,129.15 95.74,125.55 96.56,126.35 97.39,125.97 98.72,129.2 100.71,129.44 101.54,129.98 102.37,130.56 103.36,130.2 104.36,131.78 105.27,133.26 106.18,134.06 107.18,134.06 108.17,133.11 110.66,130.24 111.9,128.23 113.15,127.02 113.98,125.95 114.81,124.36 116.13,122.11 118.45,122.89 119.53,123.39 120.61,124.04 122.77,125.15 123.26,124.29 123.76,125.46 124.01,124.3 124.51,117.57 125.09,112.97 125.67,107.88 126.66,103.23 127.66,100.38 129.15,96.81 129.73,98.35 130.31,101.81 131.31,98.76 132.97,98.6 134.29,103.36 134.96,104.6 135.62,106.87 136.61,112.07 137.19,114.15 137.77,114.09 138.6,112.98 139.1,113.37 139.6,115.22 140.01,116.98 140.43,117.66 140.76,119.61 141.09,123.71 141.67,121.37 141.8,124.3" fill="none" stroke="#ff981c" stroke-width="1.5" stroke-linejoin="round"/>
<rect x="7" y="168.9" width="134" height="11.3" fill="#ff981c" />
<line x1="18.3" y1="168.9" x2="18.3" y2="180.2" stroke="#111" stroke-width="1" />
<line x1="129.7" y1="168.9" x2="129.7" y2="180.2" stroke="#111" stroke-width="1" />
<polygon points="9.6,174.5 14.2,171.3 14.2,177.7" fill="#111" />
<polygon points="138.4,174.5 133.8,171.3 133.8,177.7" fill="#111" />
<text x="74" y="178.3" font-size="10.2" fill="#222" font-family="Liberation Sans, sans-serif" text-anchor="middle" textLength="77" lengthAdjust="spacingAndGlyphs" stroke="#222" stroke-width="0.2" >(Patch Wavetable)</text>
<rect x="7.5" y="185.2" width="44" height="6.9" fill="#ff981c" />
<text x="8.8" y="191.2" font-size="6.3" fill="#111" font-family="DejaVu Sans, Liberation Sans, sans-serif" font-weight="bold" textLength="41.4" lengthAdjust="spacingAndGlyphs" >KEYTRACK</text>
<text x="56.4" y="191.2" font-size="6.3" fill="#ff981c" font-family="DejaVu Sans, Liberation Sans, sans-serif" font-weight="bold" textLength="40.9" lengthAdjust="spacingAndGlyphs" >RETRIGGER</text>
<text x="9.2" y="204.8" font-size="8.2" fill="#ff981c" font-family="DejaVu Sans, Liberation Sans, sans-serif" text-anchor="middle" font-weight="bold" >-</text>
<text x="14.1" y="204.2" font-size="6.6" fill="#ff981c" font-family="DejaVu Sans, Liberation Sans, sans-serif" text-anchor="middle" font-weight="bold" >3</text>
<text x="22.5" y="204.8" font-size="8.2" fill="#ff981c" font-family="DejaVu Sans, Liberation Sans, sans-serif" text-anchor="middle" font-weight="bold" >-</text>
<text x="27.1" y="204.2" font-size="6.6" fill="#ff981c" font-family="DejaVu Sans, Liberation Sans, sans-serif" text-anchor="middle" font-weight="bold" >2</text>
<text x="35" y="204.8" font-size="8.2" fill="#ff981c" font-family="DejaVu Sans, Liberation Sans, sans-serif" text-anchor="middle" font-weight="bold" >-</text>
<text x="39.2" y="204.2" font-size="6.6" fill="#ff981c" font-family="DejaVu Sans, Liberation Sans, sans-serif" text-anchor="middle" font-weight="bold" >1</text>
<rect x="45" y="196.4" width="12.2" height="10.4" fill="#ff981c" />
<text x="51.1" y="204.2" font-size="6.6" fill="#111" font-family="DejaVu Sans, Liberation Sans, sans-serif" text-anchor="middle" font-weight="bold" >0</text>
<text x="61.1" y="204.3" font-size="5.6" fill="#ff981c" font-family="DejaVu Sans, Liberation Sans, sans-serif" text-anchor="middle" font-weight="bold" >+</text>
<text x="65.5" y="204.2" font-size="6.6" fill="#ff981c" font-family="DejaVu Sans, Liberation Sans, sans-serif" text-anchor="middle" font-weight="bold" >1</text>
<text x="73.9" y="204.3" font-size="5.6" fill="#ff981c" font-family="DejaVu Sans, Liberation Sans, sans-serif" text-anchor="middle" font-weight="bold" >+</text>
<text x="78.8" y="204.2" font-size="6.6" fill="#ff981c" font-family="DejaVu Sans, Liberation Sans, sans-serif" text-anchor="middle" font-weight="bold" >2</text>
<text x="86.5" y="204.3" font-size="5.6" fill="#ff981c" font-family="DejaVu Sans, Liberation Sans, sans-serif" text-anchor="middle" font-weight="bold" >+</text>
<text x="91.1" y="204.2" font-size="6.6" fill="#ff981c" font-family="DejaVu Sans, Liberation Sans, sans-serif" text-anchor="middle" font-weight="bold" >3</text>
<text x="107.8" y="204.2" font-size="6.3" fill="#ff981c" font-family="DejaVu Sans, Liberation Sans, sans-serif" font-weight="bold" textLength="28.7" lengthAdjust="spacingAndGlyphs" >WINDOW</text>
<polygon points="139,199.6 144.2,199.6 141.6,203" fill="#ff981c" />
<rect x="18.4" y="224.8" width="8.03" height="3.6" fill="rgba(0,0,0,0.33)" />
<rect x="122.77" y="221.2" width="8.03" height="3.6" fill="rgba(0,0,0,0.33)" />
<rect x="26.43" y="224.8" width="8.03" height="3.09" fill="rgba(0,0,0,0.33)" />
<rect x="114.74" y="221.71" width="8.03" height="3.09" fill="rgba(0,0,0,0.33)" />
<rect x="34.46" y="224.8" width="8.03" height="2.57" fill="rgba(0,0,0,0.33)" />
<rect x="106.71" y="222.23" width="8.03" height="2.57" fill="rgba(0,0,0,0.33)" />
<rect x="42.49" y="224.8" width="8.03" height="2.06" fill="rgba(0,0,0,0.33)" />
<rect x="98.69" y="222.74" width="8.03" height="2.06" fill="rgba(0,0,0,0.33)" />
<rect x="50.51" y="224.8" width="8.03" height="1.54" fill="rgba(0,0,0,0.33)" />
<rect x="90.66" y="223.26" width="8.03" height="1.54" fill="rgba(0,0,0,0.33)" />
<rect x="58.54" y="224.8" width="8.03" height="1.03" fill="rgba(0,0,0,0.33)" />
<rect x="82.63" y="223.77" width="8.03" height="1.03" fill="rgba(0,0,0,0.33)" />
<rect x="66.57" y="224.8" width="8.03" height="0.51" fill="rgba(0,0,0,0.33)" />
<rect x="74.6" y="224.29" width="8.03" height="0.51" fill="rgba(0,0,0,0.33)" />
<line x1="18.4" y1="224.8" x2="18.4" y2="229" stroke="#000" stroke-width="1" />
<line x1="130.8" y1="224.8" x2="130.8" y2="220.6" stroke="#000" stroke-width="1" />
<line x1="26.43" y1="224.8" x2="26.43" y2="228.51" stroke="#000" stroke-width="1" />
<line x1="122.77" y1="224.8" x2="122.77" y2="221.09" stroke="#000" stroke-width="1" />
<line x1="34.46" y1="224.8" x2="34.46" y2="228.03" stroke="#000" stroke-width="1" />
<line x1="114.74" y1="224.8" x2="114.74" y2="221.57" stroke="#000" stroke-width="1" />
<line x1="42.49" y1="224.8" x2="42.49" y2="227.54" stroke="#000" stroke-width="1" />
<line x1="106.71" y1="224.8" x2="106.71" y2="222.06" stroke="#000" stroke-width="1" />
<line x1="50.51" y1="224.8" x2="50.51" y2="227.06" stroke="#000" stroke-width="1" />
<line x1="98.69" y1="224.8" x2="98.69" y2="222.54" stroke="#000" stroke-width="1" />
<line x1="58.54" y1="224.8" x2="58.54" y2="226.57" stroke="#000" stroke-width="1" />
<line x1="90.66" y1="224.8" x2="90.66" y2="223.03" stroke="#000" stroke-width="1" />
<line x1="66.57" y1="224.8" x2="66.57" y2="226.09" stroke="#000" stroke-width="1" />
<line x1="82.63" y1="224.8" x2="82.63" y2="223.51" stroke="#000" stroke-width="1" />
<line x1="13.2" y1="224.8" x2="136.4" y2="224.8" stroke="#000" stroke-width="2" />
<text x="128" y="234.8" font-size="9.3" fill="#16163a" font-family="Liberation Sans, sans-serif" text-anchor="end" textLength="21.2" lengthAdjust="spacingAndGlyphs" stroke="#16163a" stroke-width="0.08" >Pitch</text>
<rect x="66.3" y="219.7" width="18.4" height="13.4" fill="rgba(0,0,0,0.35)" rx="4.5" filter="url(#blur)"/>
<rect x="65.1" y="218.1" width="18.4" height="13.4" fill="url(#hg)" rx="4.3" stroke="#333" stroke-width="1.2" />
<line x1="74.3" y1="220.4" x2="74.3" y2="229.2" stroke="#585c66" stroke-width="0.9" />
<polygon points="18.4,245.8 130.4,239.6 130.4,245.8" fill="rgba(85,95,170,0.5)" />
<line x1="13.2" y1="245.8" x2="136" y2="245.8" stroke="#111a44" stroke-width="2" />
<line x1="130.4" y1="238.8" x2="130.4" y2="252.8" stroke="#111a44" stroke-width="1.2" />
<text x="128" y="256.2" font-size="9.3" fill="#16163a" font-family="Liberation Sans, sans-serif" text-anchor="end" stroke="#16163a" stroke-width="0.08" >Shape</text>
<rect x="10.5" y="240.7" width="18.4" height="13.4" fill="rgba(0,0,0,0.35)" rx="4.5" filter="url(#blur)"/>
<rect x="9.3" y="239.1" width="18.4" height="13.4" fill="url(#hg)" rx="4.3" stroke="#333" stroke-width="1.2" />
<line x1="18.5" y1="241.4" x2="18.5" y2="250.2" stroke="#585c66" stroke-width="0.9" />
<polygon points="18.4,267.3 130.4,261.1 130.4,267.3" fill="rgba(85,95,170,0.5)" />
<line x1="13.2" y1="267.3" x2="136" y2="267.3" stroke="#111a44" stroke-width="2" />
<line x1="18.4" y1="260.3" x2="18.4" y2="274.3" stroke="#111a44" stroke-width="1.2" />
<line x1="130.4" y1="260.3" x2="130.4" y2="274.3" stroke="#111a44" stroke-width="1.2" />
<text x="128" y="276.8" font-size="9.3" fill="#16163a" font-family="Liberation Sans, sans-serif" text-anchor="end" stroke="#16163a" stroke-width="0.08" >Formant</text>
<rect x="68.5" y="262.2" width="18.4" height="13.4" fill="rgba(0,0,0,0.35)" rx="4.5" filter="url(#blur)"/>
<rect x="67.3" y="260.6" width="18.4" height="13.4" fill="url(#hg)" rx="4.3" stroke="#333" stroke-width="1.2" />
<line x1="76.5" y1="262.9" x2="76.5" y2="271.7" stroke="#585c66" stroke-width="0.9" />
<polygon points="18.4,288.1 130.4,281.9 130.4,288.1" fill="rgba(0,0,0,0.33)" />
<line x1="13.2" y1="288.1" x2="136" y2="288.1" stroke="#000" stroke-width="2" />
<line x1="18.4" y1="281.1" x2="18.4" y2="295.1" stroke="#000" stroke-width="1.2" />
<line x1="130.4" y1="281.1" x2="130.4" y2="295.1" stroke="#000" stroke-width="1.2" />
<text x="128" y="297.9" font-size="9.3" fill="#16163a" font-family="Liberation Sans, sans-serif" text-anchor="end" stroke="#16163a" stroke-width="0.08" >Window</text>
<rect x="52.2" y="283" width="18.4" height="13.4" fill="rgba(0,0,0,0.35)" rx="4.5" filter="url(#blur)"/>
<rect x="51" y="281.4" width="18.4" height="13.4" fill="url(#hg)" rx="4.3" stroke="#333" stroke-width="1.2" />
<line x1="60.2" y1="283.7" x2="60.2" y2="292.5" stroke="#585c66" stroke-width="0.9" />
<polygon points="18.4,350.8 130.4,344.6 130.4,350.8" fill="rgba(85,95,170,0.5)" />
<line x1="13.2" y1="350.8" x2="136" y2="350.8" stroke="#111a44" stroke-width="2" />
<line x1="18.4" y1="343.8" x2="18.4" y2="357.8" stroke="#111a44" stroke-width="1.2" />
<line x1="130.4" y1="343.8" x2="130.4" y2="357.8" stroke="#111a44" stroke-width="1.2" />
<text x="128" y="360.8" font-size="9.3" fill="#16163a" font-family="Liberation Sans, sans-serif" text-anchor="end" stroke="#16163a" stroke-width="0.08" >Uni Spread</text>
<rect x="18.3" y="345.7" width="18.4" height="13.4" fill="rgba(0,0,0,0.35)" rx="4.5" filter="url(#blur)"/>
<rect x="17.1" y="344.1" width="18.4" height="13.4" fill="url(#hg)" rx="4.3" stroke="#333" stroke-width="1.2" />
<line x1="26.3" y1="346.4" x2="26.3" y2="355.2" stroke="#585c66" stroke-width="0.9" />
<polygon points="18.4,371.9 130.4,365.7 130.4,371.9" fill="rgba(0,0,0,0.33)" />
<line x1="13.2" y1="371.9" x2="136" y2="371.9" stroke="#000" stroke-width="2" />
<line x1="18.4" y1="364.9" x2="18.4" y2="378.9" stroke="#000" stroke-width="1.2" />
<line x1="130.4" y1="364.9" x2="130.4" y2="378.9" stroke="#000" stroke-width="1.2" />
<text x="128" y="382.2" font-size="9.3" fill="#16163a" font-family="Liberation Sans, sans-serif" text-anchor="end" stroke="#16163a" stroke-width="0.08" >Uni Count</text>
<rect x="47.5" y="366.8" width="18.4" height="13.4" fill="rgba(0,0,0,0.35)" rx="4.5" filter="url(#blur)"/>
<rect x="46.3" y="365.2" width="18.4" height="13.4" fill="url(#hg)" rx="4.3" stroke="#333" stroke-width="1.2" />
<line x1="55.5" y1="367.5" x2="55.5" y2="376.3" stroke="#585c66" stroke-width="0.9" />
<rect x="151" y="66.3" width="146.8" height="122.8" fill="url(#pg)" rx="5.5" stroke="#4c4f5b" stroke-width="1" />
<rect x="153" y="83" width="142" height="54.4" fill="url(#disp)" rx="4.5" />
<text x="160.5" y="77.6" font-size="9.6" fill="#cfcfd8" font-family="Liberation Sans, sans-serif" textLength="52.5" lengthAdjust="spacingAndGlyphs" stroke="#cfcfd8" stroke-width="0.2" >Bend Depth</text>
<text x="241.5" y="77.6" font-size="9.6" fill="#cfcfd8" font-family="Liberation Sans, sans-serif" textLength="43.9" lengthAdjust="spacingAndGlyphs" stroke="#cfcfd8" stroke-width="0.2" >Polymode</text>
<text x="163" y="104.8" font-size="9.4" fill="#c8c8c8" font-family="Liberation Sans, sans-serif" textLength="24.6" lengthAdjust="spacingAndGlyphs" stroke="#c8c8c8" stroke-width="0.2" >Down</text>
<text x="194.6" y="104.8" font-size="9.4" fill="#c8c8c8" font-family="Liberation Sans, sans-serif" textLength="11.8" lengthAdjust="spacingAndGlyphs" stroke="#c8c8c8" stroke-width="0.2" >Up</text>
<rect x="163" y="113.2" width="23.9" height="8.8" fill="#7a4a12" />
<rect x="188" y="113.2" width="24" height="8.8" fill="#7a4a12" />
<text x="175" y="121" font-size="9.4" fill="#fff" font-family="Liberation Sans, sans-serif" text-anchor="middle" stroke="#fff" stroke-width="0.2" >2</text>
<text x="200" y="121" font-size="9.4" fill="#fff" font-family="Liberation Sans, sans-serif" text-anchor="middle" stroke="#fff" stroke-width="0.2" >2</text>
<rect x="239" y="87" width="50.2" height="6.9" fill="#ff981c" />
<text x="241" y="93.2" font-size="6.3" fill="#fff" font-family="DejaVu Sans, Liberation Sans, sans-serif" font-weight="bold" textLength="17.4" lengthAdjust="spacingAndGlyphs" >POLY</text>
<rect x="239" y="95.02" width="50.2" height="6.9" fill="#8b5312" />
<text x="241" y="101.22" font-size="6.3" fill="#fff" font-family="DejaVu Sans, Liberation Sans, sans-serif" font-weight="bold" textLength="19.8" lengthAdjust="spacingAndGlyphs" >MONO</text>
<rect x="239" y="103.04" width="50.2" height="6.9" fill="#8b5312" />
<text x="241" y="109.24" font-size="6.3" fill="#fff" font-family="DejaVu Sans, Liberation Sans, sans-serif" font-weight="bold" textLength="32" lengthAdjust="spacingAndGlyphs" >MONO ST</text>
<rect x="239" y="111.06" width="50.2" height="6.9" fill="#8b5312" />
<text x="241" y="117.26" font-size="6.3" fill="#fff" font-family="DejaVu Sans, Liberation Sans, sans-serif" font-weight="bold" textLength="32" lengthAdjust="spacingAndGlyphs" >MONO FP</text>
<rect x="239" y="119.08" width="50.2" height="6.9" fill="#8b5312" />
<text x="241" y="125.28" font-size="6.3" fill="#fff" font-family="DejaVu Sans, Liberation Sans, sans-serif" font-weight="bold" textLength="46.6" lengthAdjust="spacingAndGlyphs" >MONO ST+FP</text>
<rect x="239" y="127.1" width="50.2" height="6.9" fill="#8b5312" />
<text x="241" y="133.3" font-size="6.3" fill="#fff" font-family="DejaVu Sans, Liberation Sans, sans-serif" font-weight="bold" textLength="23.6" lengthAdjust="spacingAndGlyphs" >LATCH</text>
<polygon points="168,152.8 280.4,146.6 280.4,152.8" fill="rgba(255,255,255,0.41)" />
<line x1="162.8" y1="152.8" x2="286" y2="152.8" stroke="#ececf0" stroke-width="2" />
<line x1="168" y1="145.8" x2="168" y2="159.8" stroke="#ececf0" stroke-width="1.2" />
<line x1="280.4" y1="145.8" x2="280.4" y2="159.8" stroke="#ececf0" stroke-width="1.2" />
<text x="278" y="162.9" font-size="9.3" fill="#f0f0f6" font-family="Liberation Sans, sans-serif" text-anchor="end" textLength="36.4" lengthAdjust="spacingAndGlyphs" stroke="#f0f0f6" stroke-width="0.08" >Osc Drift</text>
<rect x="205.7" y="147.7" width="18.4" height="13.4" fill="rgba(0,0,0,0.35)" rx="4.5" filter="url(#blur)"/>
<rect x="204.5" y="146.1" width="18.4" height="13.4" fill="url(#hg)" rx="4.3" stroke="#333" stroke-width="1.2" />
<line x1="213.7" y1="148.4" x2="213.7" y2="157.2" stroke="#585c66" stroke-width="0.9" />
<polygon points="168,174 168,180.2 224.2,174" fill="rgba(255,255,255,0.41)" />
<polygon points="224.2,174 280.4,167.8 280.4,174" fill="rgba(255,255,255,0.41)" />
<line x1="162.8" y1="174" x2="286" y2="174" stroke="#ececf0" stroke-width="2" />
<line x1="168" y1="167" x2="168" y2="181" stroke="#ececf0" stroke-width="1.2" />
<line x1="280.4" y1="167" x2="280.4" y2="181" stroke="#ececf0" stroke-width="1.2" />
<line x1="224.2" y1="171" x2="224.2" y2="177" stroke="#ececf0" stroke-width="1" />
<text x="278" y="184" font-size="9.3" fill="#f0f0f6" font-family="Liberation Sans, sans-serif" text-anchor="end" stroke="#f0f0f6" stroke-width="0.08" >Noise Color</text>
<rect x="253.8" y="168.9" width="18.4" height="13.4" fill="rgba(0,0,0,0.35)" rx="4.5" filter="url(#blur)"/>
<rect x="252.6" y="167.3" width="18.4" height="13.4" fill="url(#hg)" rx="4.3" stroke="#333" stroke-width="1.2" />
<line x1="261.8" y1="169.6" x2="261.8" y2="178.4" stroke="#585c66" stroke-width="0.9" />
<rect x="301" y="66.3" width="296.6" height="122.8" fill="url(#pg)" rx="5.5" stroke="#4c4f5b" stroke-width="1" />
<rect x="303" y="83" width="292" height="75.4" fill="url(#disp2)" rx="4.5" />
<text x="327" y="77.6" font-size="9.6" fill="#cfcfd8" font-family="Liberation Sans, sans-serif" textLength="95.4" lengthAdjust="spacingAndGlyphs" stroke="#cfcfd8" stroke-width="0.2" >Oscillator FM Routing</text>
<text x="481.4" y="77.6" font-size="9.6" fill="#cfcfd8" font-family="Liberation Sans, sans-serif" textLength="85.8" lengthAdjust="spacingAndGlyphs" stroke="#cfcfd8" stroke-width="0.2" >Filter Configuration</text>
<rect x="311" y="95" width="120.8" height="3" fill="#ff981c" />
<path d="M430.9 97 V104.7 H437" stroke="#ff981c" stroke-width="1.7" fill="none" />
<polygon points="440.4,104.7 436.3,102.4 436.3,107" fill="#ff981c" />
<line x1="325.7" y1="117.2" x2="325.7" y2="101.3" stroke="#ff981c" stroke-width="1.3" />
<polygon points="325.7,98.8 322.9,101.6 328.5,101.6" fill="#ff981c" />
<rect x="319.5" y="117.1" width="12.5" height="10.5" fill="#000" stroke="#ff981c" stroke-width="1.2" />
<text x="325.8" y="125.3" font-size="6.8" fill="#fff" font-family="DejaVu Sans, Liberation Sans, sans-serif" text-anchor="middle" font-weight="bold" textLength="9.2" lengthAdjust="spacingAndGlyphs" >01</text>
<line x1="355.4" y1="117.2" x2="355.4" y2="101.3" stroke="#ff981c" stroke-width="1.3" />
<polygon points="355.4,98.8 352.6,101.6 358.2,101.6" fill="#ff981c" />
<rect x="349.2" y="117.1" width="12.5" height="10.5" fill="#000" stroke="#ff981c" stroke-width="1.2" />
<text x="355.5" y="125.3" font-size="6.8" fill="#fff" font-family="DejaVu Sans, Liberation Sans, sans-serif" text-anchor="middle" font-weight="bold" textLength="9.2" lengthAdjust="spacingAndGlyphs" >02</text>
<line x1="385.6" y1="117.2" x2="385.6" y2="101.3" stroke="#ff981c" stroke-width="1.3" />
<polygon points="385.6,98.8 382.8,101.6 388.4,101.6" fill="#ff981c" />
<rect x="379.4" y="117.1" width="12.5" height="10.5" fill="#000" stroke="#ff981c" stroke-width="1.2" />
<text x="385.7" y="125.3" font-size="6.8" fill="#fff" font-family="DejaVu Sans, Liberation Sans, sans-serif" text-anchor="middle" font-weight="bold" textLength="9.2" lengthAdjust="spacingAndGlyphs" >03</text>
<line x1="415.5" y1="117.2" x2="415.5" y2="101.3" stroke="#8e5e20" stroke-width="1.3" />
<polygon points="415.5,98.8 412.7,101.6 418.3,101.6" fill="#8e5e20" />
<rect x="409.3" y="117.1" width="12.4" height="10.5" fill="#000" stroke="#6e4614" stroke-width="1.2" />
<text x="415.6" y="125.3" font-size="6.8" fill="#6a5c4e" font-family="DejaVu Sans, Liberation Sans, sans-serif" text-anchor="middle" font-weight="bold" >N</text>
<circle cx="340.4" cy="110.1" r="4" fill="#4a4038" stroke="#8e5e20" stroke-width="1.1"/>
<line x1="338.2" y1="107.9" x2="342.6" y2="112.3" stroke="#b8b4b0" stroke-width="1" />
<line x1="338.2" y1="112.3" x2="342.6" y2="107.9" stroke="#b8b4b0" stroke-width="1" />
<line x1="340.4" y1="106" x2="340.4" y2="101.1" stroke="#8e5e20" stroke-width="1.1" />
<polygon points="340.4,98.8 338.2,101.4 342.6,101.4" fill="#8e5e20" />
<circle cx="370.6" cy="110.1" r="4" fill="#4a4038" stroke="#8e5e20" stroke-width="1.1"/>
<line x1="368.4" y1="107.9" x2="372.8" y2="112.3" stroke="#b8b4b0" stroke-width="1" />
<line x1="368.4" y1="112.3" x2="372.8" y2="107.9" stroke="#b8b4b0" stroke-width="1" />
<line x1="370.6" y1="106" x2="370.6" y2="101.1" stroke="#8e5e20" stroke-width="1.1" />
<polygon points="370.6,98.8 368.4,101.4 372.8,101.4" fill="#8e5e20" />
<line x1="326.4" y1="110.1" x2="332.8" y2="110.1" stroke="#8e5e20" stroke-width="1.1" />
<polygon points="335.2,110.1 332.4,107.9 332.4,112.3" fill="#8e5e20" />
<line x1="355.6" y1="110.1" x2="348.1" y2="110.1" stroke="#8e5e20" stroke-width="1.1" />
<polygon points="345.7,110.1 348.5,107.9 348.5,112.3" fill="#8e5e20" />
<line x1="355.6" y1="110.1" x2="362.9" y2="110.1" stroke="#8e5e20" stroke-width="1.1" />
<polygon points="365.3,110.1 362.5,107.9 362.5,112.3" fill="#8e5e20" />
<line x1="385.6" y1="110.1" x2="378.3" y2="110.1" stroke="#8e5e20" stroke-width="1.1" />
<polygon points="375.9,110.1 378.7,107.9 378.7,112.3" fill="#8e5e20" />
<rect x="310.2" y="134.1" width="31.8" height="7" fill="#ff981c" />
<rect x="343" y="134.1" width="32" height="7" fill="#8b5312" />
<rect x="376" y="134.1" width="32" height="7" fill="#8b5312" />
<rect x="409.3" y="134.1" width="31.7" height="7" fill="#8b5312" />
<text x="326.2" y="140.4" font-size="6.5" fill="#fff" font-family="DejaVu Sans, Liberation Sans, sans-serif" text-anchor="middle" font-weight="bold" textLength="23.5" lengthAdjust="spacingAndGlyphs" >NO FM</text>
<text x="354.2" y="140.4" font-size="6.5" fill="#fff" font-family="DejaVu Sans, Liberation Sans, sans-serif" text-anchor="middle" font-weight="bold" >2</text>
<polygon points="357.3,134.8 357.3,140.2 361.1,137.5" fill="#fff" />
<text x="364.2" y="140.4" font-size="6.5" fill="#fff" font-family="DejaVu Sans, Liberation Sans, sans-serif" text-anchor="middle" font-weight="bold" >1</text>
<text x="382" y="140.4" font-size="6.5" fill="#fff" font-family="DejaVu Sans, Liberation Sans, sans-serif" text-anchor="middle" font-weight="bold" >3</text>
<polygon points="385.1,134.8 385.1,140.2 388.9,137.5" fill="#fff" />
<text x="392" y="140.4" font-size="6.5" fill="#fff" font-family="DejaVu Sans, Liberation Sans, sans-serif" text-anchor="middle" font-weight="bold" >2</text>
<polygon points="395.1,134.8 395.1,140.2 398.9,137.5" fill="#fff" />
<text x="402" y="140.4" font-size="6.5" fill="#fff" font-family="DejaVu Sans, Liberation Sans, sans-serif" text-anchor="middle" font-weight="bold" >1</text>
<text x="415" y="140.4" font-size="6.5" fill="#fff" font-family="DejaVu Sans, Liberation Sans, sans-serif" text-anchor="middle" font-weight="bold" >2</text>
<polygon points="418.1,134.8 418.1,140.2 421.9,137.5" fill="#fff" />
<text x="425" y="140.4" font-size="6.5" fill="#fff" font-family="DejaVu Sans, Liberation Sans, sans-serif" text-anchor="middle" font-weight="bold" >1</text>
<polygon points="431.9,134.8 431.9,140.2 428.1,137.5" fill="#fff" />
<text x="435" y="140.4" font-size="6.5" fill="#fff" font-family="DejaVu Sans, Liberation Sans, sans-serif" text-anchor="middle" font-weight="bold" >3</text>
<polygon points="318,173.9 430.4,167.7 430.4,173.9" fill="rgba(255,255,255,0.41)" />
<line x1="312.8" y1="173.9" x2="436" y2="173.9" stroke="#ececf0" stroke-width="2" />
<line x1="318" y1="166.9" x2="318" y2="180.9" stroke="#ececf0" stroke-width="1.2" />
<line x1="430.4" y1="166.9" x2="430.4" y2="180.9" stroke="#ececf0" stroke-width="1.2" />
<text x="428" y="184" font-size="9.3" fill="#f0f0f6" font-family="Liberation Sans, sans-serif" text-anchor="end" textLength="41" lengthAdjust="spacingAndGlyphs" stroke="#f0f0f6" stroke-width="0.08" >FM Depth</text>
<rect x="347.5" y="168.8" width="18.4" height="13.4" fill="rgba(0,0,0,0.35)" rx="4.5" filter="url(#blur)"/>
<rect x="346.3" y="167.2" width="18.4" height="13.4" fill="url(#hg)" rx="4.3" stroke="#333" stroke-width="1.2" />
<line x1="355.5" y1="169.5" x2="355.5" y2="178.3" stroke="#585c66" stroke-width="0.9" />
<g stroke="#ff9a3a" fill="none" stroke-width="1.15">
<circle cx="467.2" cy="104.5" r="3.9"/>
<path d="M458.2 101.6 h3.4 M458.2 107.5 h3.4"/>
<path d="M471 101.6 H474.5 M471 107.5 H474.5"/>
<path d="M492.6 101.6 H495 M492.6 107.5 H495"/>
<path d="M512.1 101.6 H515 M512.1 107.5 H515"/>
<path d="M532.5 101.6 H537.5 M532.5 107.5 H537.5"/>
<path d="M554 101.6 H563.5 M554 107.5 H563.5"/>
<path d="M579 101.6 H582 M579 107.5 H582"/>
<rect x="481" y="99.3" width="11.6" height="10.5"/><rect x="501.2" y="99.3" width="10.9" height="10.5"/><rect x="520.9" y="99.3" width="11.6" height="10.5"/><rect x="568.5" y="99.3" width="10.5" height="10.5"/>
<path d="M543.7 98.5 V110.4 L554.2 104.5 Z" stroke-width="1.3"/>
<path d="M556.1 101.6 V116.6 H517.5 M558.9 107.5 V122.4 H517.5 M503.5 116.6 H470.6 V114 M506 121.7 H464.7 V114"/>
<path d="M512.7 113.2 V125.9 L501.6 119.5 Z" stroke-width="1.3"/>
<path d="M501.2 104.5 h10.9 M506.6 99.3 v10.5" stroke-width="0.6"/>
</g>
<path d="M503 107.8 h2.2 l2.8 -6.4 h2.4" stroke="#fff" stroke-width="1.2" fill="none" />
<path d="M570.6 107.6 v-2 q0 -3.6 3.6 -3.6 h3" stroke="#fff" stroke-width="1.2" fill="none" />
<polygon points="478,101.6 474.2,99.3 474.2,103.9" fill="#ff9a3a" />
<polygon points="478,107.5 474.2,105.2 474.2,109.8" fill="#ff9a3a" />
<polygon points="498.6,101.6 494.8,99.3 494.8,103.9" fill="#ff9a3a" />
<polygon points="498.6,107.5 494.8,105.2 494.8,109.8" fill="#ff9a3a" />
<polygon points="518.4,101.6 514.6,99.3 514.6,103.9" fill="#ff9a3a" />
<polygon points="518.4,107.5 514.6,105.2 514.6,109.8" fill="#ff9a3a" />
<polygon points="541.2,101.6 537.4,99.3 537.4,103.9" fill="#ff9a3a" />
<polygon points="541.2,107.5 537.4,105.2 537.4,109.8" fill="#ff9a3a" />
<polygon points="567,101.6 563.2,99.3 563.2,103.9" fill="#ff9a3a" />
<polygon points="567,107.5 563.2,105.2 563.2,109.8" fill="#ff9a3a" />
<polygon points="585.6,101.6 581.8,99.3 581.8,103.9" fill="#ff9a3a" />
<polygon points="585.6,107.5 581.8,105.2 581.8,109.8" fill="#ff9a3a" />
<polygon points="514,116.6 517.8,114.3 517.8,118.9" fill="#ff9a3a" />
<polygon points="514,122.4 517.8,120.1 517.8,124.7" fill="#ff9a3a" />
<polygon points="470.6,110.8 468.3,114.4 472.9,114.4" fill="#ff9a3a" />
<polygon points="464.7,110.8 462.4,114.4 467,114.4" fill="#ff9a3a" />
<line x1="465.2" y1="104.5" x2="469.2" y2="104.5" stroke="#fff" stroke-width="1.1" />
<line x1="467.2" y1="102.5" x2="467.2" y2="106.5" stroke="#fff" stroke-width="1.1" />
<text x="486.8" y="107.4" font-size="6.4" fill="#fff" font-family="DejaVu Sans, Liberation Sans, sans-serif" text-anchor="middle" font-weight="bold" textLength="8.4" lengthAdjust="spacingAndGlyphs" >F1</text>
<text x="526.7" y="107.4" font-size="6.4" fill="#fff" font-family="DejaVu Sans, Liberation Sans, sans-serif" text-anchor="middle" font-weight="bold" textLength="8.8" lengthAdjust="spacingAndGlyphs" >F2</text>
<text x="556.2" y="98.6" font-size="5.6" fill="#fff" font-family="DejaVu Sans, Liberation Sans, sans-serif" text-anchor="middle" font-weight="bold" >A</text>
<text x="492.6" y="130.1" font-size="6" fill="#fff" font-family="DejaVu Sans, Liberation Sans, sans-serif" font-weight="bold" textLength="9.4" lengthAdjust="spacingAndGlyphs" >FB</text>
<rect x="454.6" y="134.2" width="15.4" height="6.8" fill="#7a5230" />
<rect x="455" y="134.2" width="14.6" height="6.8" fill="#a06b3c" />
<text x="462.3" y="140.3" font-size="6.3" fill="#fff" font-family="DejaVu Sans, Liberation Sans, sans-serif" text-anchor="middle" font-weight="bold" textLength="11" lengthAdjust="spacingAndGlyphs" >S 1</text>
<rect x="471.45" y="134.2" width="15.4" height="6.8" fill="#7a5230" />
<rect x="471.85" y="134.2" width="14.6" height="6.8" fill="#a06b3c" />
<text x="479.15" y="140.3" font-size="6.3" fill="#fff" font-family="DejaVu Sans, Liberation Sans, sans-serif" text-anchor="middle" font-weight="bold" textLength="11" lengthAdjust="spacingAndGlyphs" >S 2</text>
<rect x="488.3" y="134.2" width="15.4" height="6.8" fill="#7a5230" />
<rect x="488.7" y="134.2" width="14.6" height="6.8" fill="#a06b3c" />
<text x="496" y="140.3" font-size="6.3" fill="#fff" font-family="DejaVu Sans, Liberation Sans, sans-serif" text-anchor="middle" font-weight="bold" textLength="11" lengthAdjust="spacingAndGlyphs" >S 3</text>
<rect x="505.15" y="134.2" width="15.4" height="6.8" fill="#7a5230" />
<rect x="505.55" y="134.2" width="14.6" height="6.8" fill="#a06b3c" />
<text x="512.85" y="140.3" font-size="6.3" fill="#fff" font-family="DejaVu Sans, Liberation Sans, sans-serif" text-anchor="middle" font-weight="bold" textLength="11" lengthAdjust="spacingAndGlyphs" >D 1</text>
<rect x="522" y="134.2" width="15.4" height="6.8" fill="#7a5230" />
<rect x="522.4" y="134.2" width="14.6" height="6.8" fill="#a06b3c" />
<text x="529.7" y="140.3" font-size="6.3" fill="#fff" font-family="DejaVu Sans, Liberation Sans, sans-serif" text-anchor="middle" font-weight="bold" textLength="11" lengthAdjust="spacingAndGlyphs" >D 2</text>
<rect x="538.85" y="134.2" width="15.4" height="6.8" fill="#7a5230" />
<rect x="539.25" y="134.2" width="14.6" height="6.8" fill="#a06b3c" />
<text x="546.55" y="140.3" font-size="6.3" fill="#fff" font-family="DejaVu Sans, Liberation Sans, sans-serif" text-anchor="middle" font-weight="bold" textLength="13" lengthAdjust="spacingAndGlyphs" >L-R</text>
<rect x="555.7" y="134.2" width="15.4" height="6.8" fill="#7a5230" />
<rect x="556.1" y="134.2" width="14.6" height="6.8" fill="#a06b3c" />
<text x="563.4" y="140.3" font-size="6.3" fill="#fff" font-family="DejaVu Sans, Liberation Sans, sans-serif" text-anchor="middle" font-weight="bold" textLength="14.2" lengthAdjust="spacingAndGlyphs" >RING</text>
<rect x="572.55" y="134.2" width="15.4" height="6.8" fill="#7a5230" />
<rect x="572.95" y="134.2" width="14.6" height="6.8" fill="#ff9a3a" />
<path d="M576.5 137.6 H585.5" stroke="#fff" stroke-width="1.3" fill="none" />
<polygon points="574.2,137.6 577.06,135.4 577.06,139.8" fill="#fff" />
<polygon points="587.8,137.6 584.94,135.4 584.94,139.8" fill="#fff" />
<polygon points="469.3,173.9 469.3,180.1 525.5,173.9" fill="rgba(255,255,255,0.41)" />
<polygon points="525.5,173.9 581.7,167.7 581.7,173.9" fill="rgba(255,255,255,0.41)" />
<line x1="464.1" y1="173.9" x2="587.3" y2="173.9" stroke="#ececf0" stroke-width="2" />
<line x1="469.3" y1="166.9" x2="469.3" y2="180.9" stroke="#ececf0" stroke-width="1.2" />
<line x1="581.7" y1="166.9" x2="581.7" y2="180.9" stroke="#ececf0" stroke-width="1.2" />
<text x="578.7" y="184" font-size="9.3" fill="#f0f0f6" font-family="Liberation Sans, sans-serif" text-anchor="end" textLength="40.5" lengthAdjust="spacingAndGlyphs" stroke="#f0f0f6" stroke-width="0.08" >Feedback</text>
<rect x="517.5" y="168.8" width="18.4" height="13.4" fill="rgba(0,0,0,0.35)" rx="4.5" filter="url(#blur)"/>
<rect x="516.3" y="167.2" width="18.4" height="13.4" fill="url(#hg)" rx="4.3" stroke="#333" stroke-width="1.2" />
<line x1="525.5" y1="169.5" x2="525.5" y2="178.3" stroke="#585c66" stroke-width="0.9" />
<rect x="600.5" y="66.3" width="147.3" height="122.8" fill="url(#pg)" rx="5.5" stroke="#4c4f5b" stroke-width="1" />
<text x="657.2" y="77.2" font-size="9.6" fill="#cfcfd8" font-family="Liberation Sans, sans-serif" textLength="31.4" lengthAdjust="spacingAndGlyphs" stroke="#cfcfd8" stroke-width="0.2" >Output</text>
<polygon points="618,90.1 730.5,83.9 730.5,90.1" fill="rgba(255,255,255,0.41)" />
<line x1="612.8" y1="90.1" x2="736.1" y2="90.1" stroke="#ececf0" stroke-width="2" />
<line x1="618" y1="83.1" x2="618" y2="97.1" stroke="#ececf0" stroke-width="1.2" />
<line x1="730.5" y1="83.1" x2="730.5" y2="97.1" stroke="#ececf0" stroke-width="1.2" />
<text x="728" y="100.2" font-size="9.3" fill="#f0f0f6" font-family="Liberation Sans, sans-serif" text-anchor="end" stroke="#f0f0f6" stroke-width="0.08" >Volume</text>
<rect x="685.5" y="85" width="18.4" height="13.4" fill="rgba(0,0,0,0.35)" rx="4.5" filter="url(#blur)"/>
<rect x="684.3" y="83.4" width="18.4" height="13.4" fill="url(#hg)" rx="4.3" stroke="#333" stroke-width="1.2" />
<line x1="693.5" y1="85.7" x2="693.5" y2="94.5" stroke="#585c66" stroke-width="0.9" />
<polygon points="618,110.9 618,117.1 674.25,110.9" fill="rgba(255,255,255,0.41)" />
<polygon points="674.25,110.9 730.5,104.7 730.5,110.9" fill="rgba(255,255,255,0.41)" />
<line x1="612.8" y1="110.9" x2="736.1" y2="110.9" stroke="#ececf0" stroke-width="2" />
<line x1="618" y1="103.9" x2="618" y2="117.9" stroke="#ececf0" stroke-width="1.2" />
<line x1="730.5" y1="103.9" x2="730.5" y2="117.9" stroke="#ececf0" stroke-width="1.2" />
<text x="728" y="121.3" font-size="9.3" fill="#f0f0f6" font-family="Liberation Sans, sans-serif" text-anchor="end" stroke="#f0f0f6" stroke-width="0.08" >Pan</text>
<rect x="666.2" y="105.8" width="18.4" height="13.4" fill="rgba(0,0,0,0.35)" rx="4.5" filter="url(#blur)"/>
<rect x="665" y="104.2" width="18.4" height="13.4" fill="url(#hg)" rx="4.3" stroke="#333" stroke-width="1.2" />
<line x1="674.2" y1="106.5" x2="674.2" y2="115.3" stroke="#585c66" stroke-width="0.9" />
<polygon points="618,132 618,138.2 674.25,132" fill="rgba(255,255,255,0.41)" />
<polygon points="674.25,132 730.5,125.8 730.5,132" fill="rgba(255,255,255,0.41)" />
<line x1="612.8" y1="132" x2="736.1" y2="132" stroke="#ececf0" stroke-width="2" />
<line x1="618" y1="125" x2="618" y2="139" stroke="#ececf0" stroke-width="1.2" />
<line x1="674.25" y1="129" x2="674.25" y2="135" stroke="#ececf0" stroke-width="1" />
<text x="728" y="142.1" font-size="9.3" fill="#f0f0f6" font-family="Liberation Sans, sans-serif" text-anchor="end" stroke="#f0f0f6" stroke-width="0.08" >Width</text>
<rect x="722.4" y="126.9" width="18.4" height="13.4" fill="rgba(0,0,0,0.35)" rx="4.5" filter="url(#blur)"/>
<rect x="721.2" y="125.3" width="18.4" height="13.4" fill="url(#hg)" rx="4.3" stroke="#333" stroke-width="1.2" />
<line x1="730.4" y1="127.6" x2="730.4" y2="136.4" stroke="#585c66" stroke-width="0.9" />
<polygon points="618,152.8 730.5,146.6 730.5,152.8" fill="rgba(255,255,255,0.41)" />
<line x1="612.8" y1="152.8" x2="736.1" y2="152.8" stroke="#ececf0" stroke-width="2" />
<line x1="618" y1="145.8" x2="618" y2="159.8" stroke="#ececf0" stroke-width="1.2" />
<line x1="730.5" y1="145.8" x2="730.5" y2="159.8" stroke="#ececf0" stroke-width="1.2" />
<text x="728" y="162.9" font-size="9.3" fill="#f0f0f6" font-family="Liberation Sans, sans-serif" text-anchor="end" stroke="#f0f0f6" stroke-width="0.08" >FX1 Send</text>
<rect x="667.3" y="147.7" width="18.4" height="13.4" fill="rgba(0,0,0,0.35)" rx="4.5" filter="url(#blur)"/>
<rect x="666.1" y="146.1" width="18.4" height="13.4" fill="url(#hg)" rx="4.3" stroke="#333" stroke-width="1.2" />
<line x1="675.3" y1="148.4" x2="675.3" y2="157.2" stroke="#585c66" stroke-width="0.9" />
<polygon points="618,173.9 730.5,167.7 730.5,173.9" fill="rgba(255,255,255,0.41)" />
<line x1="612.8" y1="173.9" x2="736.1" y2="173.9" stroke="#ececf0" stroke-width="2" />
<line x1="730.5" y1="166.9" x2="730.5" y2="180.9" stroke="#ececf0" stroke-width="1.2" />
<text x="728" y="184" font-size="9.3" fill="#f0f0f6" font-family="Liberation Sans, sans-serif" text-anchor="end" stroke="#f0f0f6" stroke-width="0.08" >FX2 Send</text>
<rect x="610.6" y="168.8" width="18.4" height="13.4" fill="rgba(0,0,0,0.35)" rx="4.5" filter="url(#blur)"/>
<rect x="609.4" y="167.2" width="18.4" height="13.4" fill="url(#hg)" rx="4.3" stroke="#333" stroke-width="1.2" />
<line x1="618.6" y1="169.5" x2="618.6" y2="178.3" stroke="#585c66" stroke-width="0.9" />
<rect x="151" y="192.3" width="146.8" height="67" fill="url(#lg)" rx="5.5" />
<rect x="151" y="192.3" width="146.8" height="67" fill="url(#stripes)" rx="5.5" />
<path d="M151 210.4 V197.3 Q151 192.3 156.5 192.3 H292.3 Q297.8 192.3 297.8 197.3 V210.4 Z" stroke="none" stroke-width="0" fill="url(#hdr)" />
<rect x="151" y="210.4" width="146.8" height="3.5" fill="url(#shtop)" />
<rect x="151" y="192.3" width="146.8" height="67" fill="none" rx="5.5" stroke="#4a4d5c" stroke-width="1" />
<text x="155.5" y="204.8" font-size="9.8" fill="#ff981c" font-family="Liberation Sans, sans-serif" textLength="27.1" lengthAdjust="spacingAndGlyphs" stroke="#ff981c" stroke-width="0.2" >Scene</text>
<text x="208.9" y="204.8" font-size="8.2" fill="#ff981c" font-family="DejaVu Sans, Liberation Sans, sans-serif" text-anchor="middle" font-weight="bold" >-</text>
<text x="213.5" y="204.2" font-size="6.6" fill="#ff981c" font-family="DejaVu Sans, Liberation Sans, sans-serif" text-anchor="middle" font-weight="bold" >3</text>
<text x="221.9" y="204.8" font-size="8.2" fill="#ff981c" font-family="DejaVu Sans, Liberation Sans, sans-serif" text-anchor="middle" font-weight="bold" >-</text>
<text x="226.3" y="204.2" font-size="6.6" fill="#ff981c" font-family="DejaVu Sans, Liberation Sans, sans-serif" text-anchor="middle" font-weight="bold" >2</text>
<text x="234.5" y="204.8" font-size="8.2" fill="#ff981c" font-family="DejaVu Sans, Liberation Sans, sans-serif" text-anchor="middle" font-weight="bold" >-</text>
<text x="238.6" y="204.2" font-size="6.6" fill="#ff981c" font-family="DejaVu Sans, Liberation Sans, sans-serif" text-anchor="middle" font-weight="bold" >1</text>
<rect x="244" y="196.4" width="12.2" height="10.4" fill="#ff981c" />
<text x="250.1" y="204.2" font-size="6.6" fill="#111" font-family="DejaVu Sans, Liberation Sans, sans-serif" text-anchor="middle" font-weight="bold" >0</text>
<text x="260.1" y="204.3" font-size="5.6" fill="#ff981c" font-family="DejaVu Sans, Liberation Sans, sans-serif" text-anchor="middle" font-weight="bold" >+</text>
<text x="264.4" y="204.2" font-size="6.6" fill="#ff981c" font-family="DejaVu Sans, Liberation Sans, sans-serif" text-anchor="middle" font-weight="bold" >1</text>
<text x="273.3" y="204.3" font-size="5.6" fill="#ff981c" font-family="DejaVu Sans, Liberation Sans, sans-serif" text-anchor="middle" font-weight="bold" >+</text>
<text x="278.2" y="204.2" font-size="6.6" fill="#ff981c" font-family="DejaVu Sans, Liberation Sans, sans-serif" text-anchor="middle" font-weight="bold" >2</text>
<text x="285.9" y="204.3" font-size="5.6" fill="#ff981c" font-family="DejaVu Sans, Liberation Sans, sans-serif" text-anchor="middle" font-weight="bold" >+</text>
<text x="290.3" y="204.2" font-size="6.6" fill="#ff981c" font-family="DejaVu Sans, Liberation Sans, sans-serif" text-anchor="middle" font-weight="bold" >3</text>
<rect x="168" y="224.9" width="8.03" height="3.6" fill="rgba(85,95,170,0.5)" />
<rect x="272.37" y="221.3" width="8.03" height="3.6" fill="rgba(85,95,170,0.5)" />
<rect x="176.03" y="224.9" width="8.03" height="3.09" fill="rgba(85,95,170,0.5)" />
<rect x="264.34" y="221.81" width="8.03" height="3.09" fill="rgba(85,95,170,0.5)" />
<rect x="184.06" y="224.9" width="8.03" height="2.57" fill="rgba(85,95,170,0.5)" />
<rect x="256.31" y="222.33" width="8.03" height="2.57" fill="rgba(85,95,170,0.5)" />
<rect x="192.09" y="224.9" width="8.03" height="2.06" fill="rgba(85,95,170,0.5)" />
<rect x="248.29" y="222.84" width="8.03" height="2.06" fill="rgba(85,95,170,0.5)" />
<rect x="200.11" y="224.9" width="8.03" height="1.54" fill="rgba(85,95,170,0.5)" />
<rect x="240.26" y="223.36" width="8.03" height="1.54" fill="rgba(85,95,170,0.5)" />
<rect x="208.14" y="224.9" width="8.03" height="1.03" fill="rgba(85,95,170,0.5)" />
<rect x="232.23" y="223.87" width="8.03" height="1.03" fill="rgba(85,95,170,0.5)" />
<rect x="216.17" y="224.9" width="8.03" height="0.51" fill="rgba(85,95,170,0.5)" />
<rect x="224.2" y="224.39" width="8.03" height="0.51" fill="rgba(85,95,170,0.5)" />
<line x1="168" y1="224.9" x2="168" y2="229.1" stroke="#111a44" stroke-width="1" />
<line x1="280.4" y1="224.9" x2="280.4" y2="220.7" stroke="#111a44" stroke-width="1" />
<line x1="176.03" y1="224.9" x2="176.03" y2="228.61" stroke="#111a44" stroke-width="1" />
<line x1="272.37" y1="224.9" x2="272.37" y2="221.19" stroke="#111a44" stroke-width="1" />
<line x1="184.06" y1="224.9" x2="184.06" y2="228.13" stroke="#111a44" stroke-width="1" />
<line x1="264.34" y1="224.9" x2="264.34" y2="221.67" stroke="#111a44" stroke-width="1" />
<line x1="192.09" y1="224.9" x2="192.09" y2="227.64" stroke="#111a44" stroke-width="1" />
<line x1="256.31" y1="224.9" x2="256.31" y2="222.16" stroke="#111a44" stroke-width="1" />
<line x1="200.11" y1="224.9" x2="200.11" y2="227.16" stroke="#111a44" stroke-width="1" />
<line x1="248.29" y1="224.9" x2="248.29" y2="222.64" stroke="#111a44" stroke-width="1" />
<line x1="208.14" y1="224.9" x2="208.14" y2="226.67" stroke="#111a44" stroke-width="1" />
<line x1="240.26" y1="224.9" x2="240.26" y2="223.13" stroke="#111a44" stroke-width="1" />
<line x1="216.17" y1="224.9" x2="216.17" y2="226.19" stroke="#111a44" stroke-width="1" />
<line x1="232.23" y1="224.9" x2="232.23" y2="223.61" stroke="#111a44" stroke-width="1" />
<line x1="162.8" y1="224.9" x2="286" y2="224.9" stroke="#111a44" stroke-width="2" />
<text x="278" y="234.6" font-size="9.3" fill="#16163a" font-family="Liberation Sans, sans-serif" text-anchor="end" textLength="21.2" lengthAdjust="spacingAndGlyphs" stroke="#16163a" stroke-width="0.08" >Pitch</text>
<rect x="216.3" y="219.8" width="18.4" height="13.4" fill="rgba(0,0,0,0.35)" rx="4.5" filter="url(#blur)"/>
<rect x="215.1" y="218.2" width="18.4" height="13.4" fill="url(#hg)" rx="4.3" stroke="#333" stroke-width="1.2" />
<line x1="224.3" y1="220.5" x2="224.3" y2="229.3" stroke="#585c66" stroke-width="0.9" />
<polygon points="168,246 280.4,239.8 280.4,246" fill="rgba(0,0,0,0.33)" />
<line x1="162.8" y1="246" x2="286" y2="246" stroke="#000" stroke-width="2" />
<line x1="280.4" y1="239" x2="280.4" y2="253" stroke="#000" stroke-width="1.2" />
<text x="278" y="255.2" font-size="9.3" fill="#16163a" font-family="Liberation Sans, sans-serif" text-anchor="end" textLength="48" lengthAdjust="spacingAndGlyphs" stroke="#16163a" stroke-width="0.08" >Portamento</text>
<rect x="160.5" y="240.9" width="18.4" height="13.4" fill="rgba(0,0,0,0.35)" rx="4.5" filter="url(#blur)"/>
<rect x="159.3" y="239.3" width="18.4" height="13.4" fill="url(#hg)" rx="4.3" stroke="#333" stroke-width="1.2" />
<line x1="168.5" y1="241.6" x2="168.5" y2="250.4" stroke="#585c66" stroke-width="0.9" />
<rect x="301" y="192.3" width="446.6" height="67" fill="url(#lg)" rx="5.5" />
<rect x="301" y="192.3" width="446.6" height="67" fill="url(#stripes)" rx="5.5" />
<path d="M301 210.4 V197.3 Q301 192.3 306.5 192.3 H742.1 Q747.6 192.3 747.6 197.3 V210.4 Z" stroke="none" stroke-width="0" fill="url(#hdr)" />
<rect x="301" y="210.4" width="446.6" height="3.5" fill="url(#shtop)" />
<rect x="301" y="192.3" width="446.6" height="67" fill="none" rx="5.5" stroke="#4a4d5c" stroke-width="1" />
<rect x="317.7" y="195.8" width="11.5" height="11" fill="#ff981c" />
<path d="M307 202 h8" stroke="#ff981c" stroke-width="1.5" fill="none" />
<path d="M319.5 201.2 h4.3 q1.9 0 2.5 1.9 l0.9 2.6" stroke="#111" stroke-width="1.4" fill="none" stroke-linecap="round" stroke-linejoin="round"/>
<path d="M331 201.2 h3.6 q1.6 0 2 1.7 l0.7 2.8 M336.6 196.8 v2.3 h2.5 M338.3 196.8 v3.8" stroke="#ff981c" stroke-width="1.1" fill="none" stroke-linecap="round" stroke-linejoin="round"/>
<path d="M343.4 201.2 h3.6 q1.6 0 2 1.7 l0.7 2.8 M349.1 196.8 v2.6 h2.4" stroke="#ff981c" stroke-width="1.1" fill="none" stroke-linecap="round" stroke-linejoin="round"/>
<path d="M356.3 205.7 l0.9 -2.6 q0.6 -1.9 2.5 -1.9 h4.3" stroke="#ff981c" stroke-width="1.4" fill="none" stroke-linecap="round" stroke-linejoin="round"/>
<path d="M368.9 205.7 l0.8 -2.6 q0.5 -1.9 2.3 -1.9 h3.6 M367.3 196.8 v2.3 h2.5 M369.1 196.8 v3.8" stroke="#ff981c" stroke-width="1.1" fill="none" stroke-linecap="round" stroke-linejoin="round"/>
<path d="M379.3 205.7 C381.1 202.2 382.3 200.8 383.5 200.8 S385.9 202.2 387.7 205.7" stroke="#ff981c" stroke-width="1.25" fill="none" stroke-linecap="round" stroke-linejoin="round"/>
<path d="M391.2 200.9 C393 204.7 394.2 206.1 395.4 206.1 S397.8 204.7 399.6 200.9" stroke="#ff981c" stroke-width="1.25" fill="none" stroke-linecap="round" stroke-linejoin="round"/>
<path d="M402.7 201.5 q0.3 4.3 1.3 4.3 q1 0 1.8 -3.3 q0.8 3.3 1.7 3.3 q0.9 0 1.7 -3.3 q0.8 3.3 1.8 3.3 q1 0 1.3 -4.3" stroke="#ff981c" stroke-width="1.1" fill="none" stroke-linecap="round" stroke-linejoin="round"/>
<text x="415" y="201.4" font-size="5.6" fill="#ff981c" font-family="DejaVu Sans, Liberation Sans, sans-serif" font-weight="bold" >S</text>
<text x="421.2" y="205.9" font-size="4.8" fill="#ff981c" font-family="DejaVu Sans, Liberation Sans, sans-serif" font-weight="bold" >H</text>
<line x1="418" y1="205.8" x2="422" y2="197" stroke="#ff981c" stroke-width="1" />
<rect x="432" y="196.4" width="10.4" height="10.6" fill="#ff981c" />
<text x="437.2" y="204.8" font-size="7.6" fill="#111" font-family="DejaVu Sans, Liberation Sans, sans-serif" text-anchor="middle" font-weight="bold" >1</text>
<polygon points="447,201.6 450.8,198.4 450.8,204.8" fill="#ff981c" />
<text x="455" y="204.8" font-size="9.7" fill="#ff981c" font-family="Liberation Sans, sans-serif" textLength="30.4" lengthAdjust="spacingAndGlyphs" stroke="#ff981c" stroke-width="0.2" >Filter 1</text>
<text x="562" y="204.8" font-size="9.7" fill="#ff981c" font-family="Liberation Sans, sans-serif" textLength="30.2" lengthAdjust="spacingAndGlyphs" stroke="#ff981c" stroke-width="0.2" >Filter 2</text>
<polygon points="600.8,201.6 597,198.4 597,204.8" fill="#ff981c" />
<rect x="605.8" y="195.8" width="11.5" height="11" fill="#ff981c" />
<path d="M607.5 202 h8" stroke="#111" stroke-width="1.5" fill="none" />
<path d="M619.1 201.2 h4.3 q1.9 0 2.5 1.9 l0.9 2.6" stroke="#ff981c" stroke-width="1.4" fill="none" stroke-linecap="round" stroke-linejoin="round"/>
<path d="M630.6 201.2 h3.6 q1.6 0 2 1.7 l0.7 2.8 M636.2 196.8 v2.3 h2.5 M637.9 196.8 v3.8" stroke="#ff981c" stroke-width="1.1" fill="none" stroke-linecap="round" stroke-linejoin="round"/>
<path d="M643 201.2 h3.6 q1.6 0 2 1.7 l0.7 2.8 M648.7 196.8 v2.6 h2.4" stroke="#ff981c" stroke-width="1.1" fill="none" stroke-linecap="round" stroke-linejoin="round"/>
<path d="M655.9 205.7 l0.9 -2.6 q0.6 -1.9 2.5 -1.9 h4.3" stroke="#ff981c" stroke-width="1.4" fill="none" stroke-linecap="round" stroke-linejoin="round"/>
<path d="M668.5 205.7 l0.8 -2.6 q0.5 -1.9 2.3 -1.9 h3.6 M666.9 196.8 v2.3 h2.5 M668.7 196.8 v3.8" stroke="#ff981c" stroke-width="1.1" fill="none" stroke-linecap="round" stroke-linejoin="round"/>
<path d="M678.9 205.7 C680.7 202.2 681.9 200.8 683.1 200.8 S685.5 202.2 687.3 205.7" stroke="#ff981c" stroke-width="1.25" fill="none" stroke-linecap="round" stroke-linejoin="round"/>
<path d="M690.8 200.9 C692.6 204.7 693.8 206.1 695 206.1 S697.4 204.7 699.2 200.9" stroke="#ff981c" stroke-width="1.25" fill="none" stroke-linecap="round" stroke-linejoin="round"/>
<path d="M702.3 201.5 q0.3 4.3 1.3 4.3 q1 0 1.8 -3.3 q0.8 3.3 1.7 3.3 q0.9 0 1.7 -3.3 q0.8 3.3 1.8 3.3 q1 0 1.3 -4.3" stroke="#ff981c" stroke-width="1.1" fill="none" stroke-linecap="round" stroke-linejoin="round"/>
<text x="714.6" y="201.4" font-size="5.6" fill="#ff981c" font-family="DejaVu Sans, Liberation Sans, sans-serif" font-weight="bold" >S</text>
<text x="720.8" y="205.9" font-size="4.8" fill="#ff981c" font-family="DejaVu Sans, Liberation Sans, sans-serif" font-weight="bold" >H</text>
<line x1="717.6" y1="205.8" x2="721.6" y2="197" stroke="#ff981c" stroke-width="1" />
<polygon points="318.6,224.9 430.7,218.7 430.7,224.9" fill="rgba(70,90,200,0.68)" />
<line x1="313.4" y1="224.9" x2="436.3" y2="224.9" stroke="#3a4aa0" stroke-width="2" />
<line x1="318.6" y1="217.9" x2="318.6" y2="231.9" stroke="#3a4aa0" stroke-width="1.2" />
<line x1="430.7" y1="217.9" x2="430.7" y2="231.9" stroke="#3a4aa0" stroke-width="1.2" />
<text x="428.2" y="234.6" font-size="9.3" fill="#16163a" font-family="Liberation Sans, sans-serif" text-anchor="end" stroke="#16163a" stroke-width="0.08" >Cutoff</text>
<rect x="357.3" y="219.8" width="18.4" height="13.4" fill="rgba(0,0,0,0.35)" rx="4.5" filter="url(#blur)"/>
<rect x="356.1" y="218.2" width="18.4" height="13.4" fill="url(#hg)" rx="4.3" stroke="#333" stroke-width="1.2" />
<line x1="365.3" y1="220.5" x2="365.3" y2="229.3" stroke="#585c66" stroke-width="0.9" />
<polygon points="318.6,246 430.7,239.8 430.7,246" fill="rgba(0,0,0,0.33)" />
<line x1="313.4" y1="246" x2="436.3" y2="246" stroke="#000" stroke-width="2" />
<line x1="318.6" y1="239" x2="318.6" y2="253" stroke="#000" stroke-width="1.2" />
<line x1="430.7" y1="239" x2="430.7" y2="253" stroke="#000" stroke-width="1.2" />
<text x="428.2" y="255.2" font-size="9.3" fill="#16163a" font-family="Liberation Sans, sans-serif" text-anchor="end" textLength="45.5" lengthAdjust="spacingAndGlyphs" stroke="#16163a" stroke-width="0.08" >Resonance</text>
<rect x="382.4" y="240.9" width="18.4" height="13.4" fill="rgba(0,0,0,0.35)" rx="4.5" filter="url(#blur)"/>
<rect x="381.2" y="239.3" width="18.4" height="13.4" fill="url(#hg)" rx="4.3" stroke="#333" stroke-width="1.2" />
<line x1="390.4" y1="241.6" x2="390.4" y2="250.4" stroke="#585c66" stroke-width="0.9" />
<line x1="449.5" y1="216.3" x2="449.5" y2="254.7" stroke="#8c8cb0" stroke-width="1.2" />
<polygon points="468.3,235.9 468.3,242.1 524.45,235.9" fill="rgba(0,0,0,0.33)" />
<polygon points="524.45,235.9 580.6,229.7 580.6,235.9" fill="rgba(0,0,0,0.33)" />
<line x1="463.1" y1="235.9" x2="586.2" y2="235.9" stroke="#000" stroke-width="2" />
<line x1="468.3" y1="228.9" x2="468.3" y2="242.9" stroke="#000" stroke-width="1.2" />
<line x1="580.6" y1="228.9" x2="580.6" y2="242.9" stroke="#000" stroke-width="1.2" />
<rect x="516.4" y="230.8" width="18.4" height="13.4" fill="rgba(0,0,0,0.35)" rx="4.5" filter="url(#blur)"/>
<rect x="515.2" y="229.2" width="18.4" height="13.4" fill="url(#hg)" rx="4.3" stroke="#333" stroke-width="1.2" />
<line x1="524.4" y1="231.5" x2="524.4" y2="240.3" stroke="#585c66" stroke-width="0.9" />
<text x="472.6" y="246.1" font-size="9.3" fill="#16163a" font-family="Liberation Sans, sans-serif" stroke="#16163a" stroke-width="0.08" >F1</text>
<text x="568" y="246.1" font-size="9.3" fill="#16163a" font-family="Liberation Sans, sans-serif" stroke="#16163a" stroke-width="0.08" >F2</text>
<line x1="599.3" y1="216.3" x2="599.3" y2="254.7" stroke="#8c8cb0" stroke-width="1.2" />
<polygon points="618.3,224.9 730.4,218.7 730.4,224.9" fill="rgba(0,0,0,0.33)" />
<line x1="613.1" y1="224.9" x2="736" y2="224.9" stroke="#000" stroke-width="2" />
<line x1="618.3" y1="217.9" x2="618.3" y2="231.9" stroke="#000" stroke-width="1.2" />
<line x1="730.4" y1="217.9" x2="730.4" y2="231.9" stroke="#000" stroke-width="1.2" />
<text x="728" y="234.6" font-size="9.3" fill="#16163a" font-family="Liberation Sans, sans-serif" text-anchor="end" stroke="#16163a" stroke-width="0.08" >Cutoff</text>
<rect x="649.3" y="219.8" width="18.4" height="13.4" fill="rgba(0,0,0,0.35)" rx="4.5" filter="url(#blur)"/>
<rect x="648.1" y="218.2" width="18.4" height="13.4" fill="url(#hg)" rx="4.3" stroke="#333" stroke-width="1.2" />
<line x1="657.3" y1="220.5" x2="657.3" y2="229.3" stroke="#585c66" stroke-width="0.9" />
<polygon points="618.3,246 730.4,239.8 730.4,246" fill="rgba(0,0,0,0.33)" />
<line x1="613.1" y1="246" x2="736" y2="246" stroke="#000" stroke-width="2" />
<line x1="730.4" y1="239" x2="730.4" y2="253" stroke="#000" stroke-width="1.2" />
<text x="728" y="255.2" font-size="9.3" fill="#16163a" font-family="Liberation Sans, sans-serif" text-anchor="end" textLength="45.5" lengthAdjust="spacingAndGlyphs" stroke="#16163a" stroke-width="0.08" >Resonance</text>
<rect x="610.6" y="240.9" width="18.4" height="13.4" fill="rgba(0,0,0,0.35)" rx="4.5" filter="url(#blur)"/>
<rect x="609.4" y="239.3" width="18.4" height="13.4" fill="url(#hg)" rx="4.3" stroke="#333" stroke-width="1.2" />
<line x1="618.6" y1="241.6" x2="618.6" y2="250.4" stroke="#585c66" stroke-width="0.9" />
<ellipse cx="739.9" cy="225.1" rx="4.7" ry="5.9" fill="url(#btn)" stroke="#777" stroke-width="1"/>
<text x="739.9" y="227.6" font-size="6.8" fill="#111" font-family="DejaVu Sans, Liberation Sans, sans-serif" text-anchor="middle" font-weight="bold" >R</text>
<ellipse cx="739.9" cy="246.3" rx="4.7" ry="5.9" fill="url(#btn)" stroke="#777" stroke-width="1"/>
<text x="739.9" y="248.8" font-size="6.8" fill="#111" font-family="DejaVu Sans, Liberation Sans, sans-serif" text-anchor="middle" font-weight="bold" >L</text>
<rect x="151" y="262.8" width="146.8" height="132.3" fill="url(#pg)" rx="5.5" stroke="#4c4f5b" stroke-width="1" />
<rect x="158.1" y="268.1" width="14" height="6.9" fill="url(#mb)" />
<text x="165.1" y="274.1" font-size="6.4" fill="#4c4c58" font-family="DejaVu Sans, sans-serif" text-anchor="middle" stroke="#4c4c58" stroke-width="0.35" >M</text>
<rect x="158.1" y="278.1" width="14" height="6.9" fill="url(#mb)" />
<text x="165.1" y="284.1" font-size="6.4" fill="#33333c" font-family="DejaVu Sans, sans-serif" text-anchor="middle" stroke="#33333c" stroke-width="0.35" >S</text>
<rect x="158.1" y="288" width="14" height="7" fill="#0a4a18" />
<rect x="158.1" y="288" width="4.4" height="7" fill="#0d6a22" />
<rect x="163" y="288" width="4.4" height="7" fill="#16d238" />
<rect x="167.9" y="288" width="4.2" height="7" fill="#0d6a22" />
<rect x="160.3" y="288" width="2.2" height="7" fill="#128a2c" />
<rect x="167.9" y="288" width="2" height="7" fill="#128a2c" />
<polygon points="164.1,364.1 171.1,308.5 164.1,308.5" fill="rgba(255,255,255,0.41)" />
<line x1="164.1" y1="299.1" x2="164.1" y2="372.1" stroke="#ececf0" stroke-width="2" />
<line x1="157.1" y1="308.5" x2="171.1" y2="308.5" stroke="#ececf0" stroke-width="1.1" />
<line x1="157.1" y1="364.1" x2="171.1" y2="364.1" stroke="#ececf0" stroke-width="1.1" />
<rect x="158.7" y="301.3" width="13.2" height="17.6" fill="rgba(0,0,0,0.35)" rx="4.5" filter="url(#blur)"/>
<rect x="157.5" y="299.7" width="13.2" height="17.6" fill="url(#hg)" rx="4.3" stroke="#333" stroke-width="1.2" />
<line x1="159.7" y1="308.5" x2="168.5" y2="308.5" stroke="#585c66" stroke-width="0.9" />
<rect x="177.16" y="267.1" width="16" height="8.9" fill="#ff4030" rx="2" filter="url(#glow)" opacity="0.7"/>
<rect x="178.16" y="268.1" width="14" height="6.9" fill="url(#mr)" />
<text x="185.16" y="274.1" font-size="6.4" fill="#d43222" font-family="DejaVu Sans, sans-serif" text-anchor="middle" stroke="#d43222" stroke-width="0.35" >M</text>
<rect x="178.16" y="278.1" width="14" height="6.9" fill="url(#mb)" />
<text x="185.16" y="284.1" font-size="6.4" fill="#33333c" font-family="DejaVu Sans, sans-serif" text-anchor="middle" stroke="#33333c" stroke-width="0.35" >S</text>
<rect x="178.16" y="288" width="14" height="7" fill="#0a4a18" />
<rect x="178.16" y="288" width="4.4" height="7" fill="#0d6a22" />
<rect x="183.06" y="288" width="4.4" height="7" fill="#16d238" />
<rect x="187.96" y="288" width="4.2" height="7" fill="#0d6a22" />
<rect x="180.36" y="288" width="2.2" height="7" fill="#128a2c" />
<rect x="187.96" y="288" width="2" height="7" fill="#128a2c" />
<polygon points="184.16,364.1 191.16,308.5 184.16,308.5" fill="rgba(255,255,255,0.41)" />
<line x1="184.16" y1="299.1" x2="184.16" y2="372.1" stroke="#ececf0" stroke-width="2" />
<line x1="177.16" y1="308.5" x2="191.16" y2="308.5" stroke="#ececf0" stroke-width="1.1" />
<line x1="177.16" y1="364.1" x2="191.16" y2="364.1" stroke="#ececf0" stroke-width="1.1" />
<rect x="178.76" y="301.3" width="13.2" height="17.6" fill="rgba(0,0,0,0.35)" rx="4.5" filter="url(#blur)"/>
<rect x="177.56" y="299.7" width="13.2" height="17.6" fill="url(#hg)" rx="4.3" stroke="#333" stroke-width="1.2" />
<line x1="179.76" y1="308.5" x2="188.56" y2="308.5" stroke="#585c66" stroke-width="0.9" />
<rect x="197.22" y="267.1" width="16" height="8.9" fill="#ff4030" rx="2" filter="url(#glow)" opacity="0.7"/>
<rect x="198.22" y="268.1" width="14" height="6.9" fill="url(#mr)" />
<text x="205.22" y="274.1" font-size="6.4" fill="#d43222" font-family="DejaVu Sans, sans-serif" text-anchor="middle" stroke="#d43222" stroke-width="0.35" >M</text>
<rect x="198.22" y="278.1" width="14" height="6.9" fill="url(#mb)" />
<text x="205.22" y="284.1" font-size="6.4" fill="#33333c" font-family="DejaVu Sans, sans-serif" text-anchor="middle" stroke="#33333c" stroke-width="0.35" >S</text>
<rect x="198.22" y="288" width="14" height="7" fill="#0a4a18" />
<rect x="198.22" y="288" width="4.4" height="7" fill="#0d6a22" />
<rect x="203.12" y="288" width="4.4" height="7" fill="#16d238" />
<rect x="208.02" y="288" width="4.2" height="7" fill="#0d6a22" />
<rect x="200.42" y="288" width="2.2" height="7" fill="#128a2c" />
<rect x="208.02" y="288" width="2" height="7" fill="#128a2c" />
<polygon points="204.22,364.1 211.22,308.5 204.22,308.5" fill="rgba(255,255,255,0.41)" />
<line x1="204.22" y1="299.1" x2="204.22" y2="372.1" stroke="#ececf0" stroke-width="2" />
<line x1="197.22" y1="308.5" x2="211.22" y2="308.5" stroke="#ececf0" stroke-width="1.1" />
<line x1="197.22" y1="364.1" x2="211.22" y2="364.1" stroke="#ececf0" stroke-width="1.1" />
<rect x="198.82" y="301.3" width="13.2" height="17.6" fill="rgba(0,0,0,0.35)" rx="4.5" filter="url(#blur)"/>
<rect x="197.62" y="299.7" width="13.2" height="17.6" fill="url(#hg)" rx="4.3" stroke="#333" stroke-width="1.2" />
<line x1="199.82" y1="308.5" x2="208.62" y2="308.5" stroke="#585c66" stroke-width="0.9" />
<rect x="217.28" y="267.1" width="16" height="8.9" fill="#ff4030" rx="2" filter="url(#glow)" opacity="0.7"/>
<rect x="218.28" y="268.1" width="14" height="6.9" fill="url(#mr)" />
<text x="225.28" y="274.1" font-size="6.4" fill="#d43222" font-family="DejaVu Sans, sans-serif" text-anchor="middle" stroke="#d43222" stroke-width="0.35" >M</text>
<rect x="218.28" y="278.1" width="14" height="6.9" fill="url(#mb)" />
<text x="225.28" y="284.1" font-size="6.4" fill="#33333c" font-family="DejaVu Sans, sans-serif" text-anchor="middle" stroke="#33333c" stroke-width="0.35" >S</text>
<rect x="218.28" y="288" width="14" height="7" fill="#0a4a18" />
<rect x="218.28" y="288" width="4.4" height="7" fill="#0d6a22" />
<rect x="223.18" y="288" width="4.4" height="7" fill="#16d238" />
<rect x="228.08" y="288" width="4.2" height="7" fill="#0d6a22" />
<rect x="220.48" y="288" width="2.2" height="7" fill="#128a2c" />
<rect x="228.08" y="288" width="2" height="7" fill="#128a2c" />
<polygon points="224.28,364.1 231.28,308.5 224.28,308.5" fill="rgba(255,255,255,0.41)" />
<line x1="224.28" y1="299.1" x2="224.28" y2="372.1" stroke="#ececf0" stroke-width="2" />
<line x1="217.28" y1="308.5" x2="231.28" y2="308.5" stroke="#ececf0" stroke-width="1.1" />
<line x1="217.28" y1="364.1" x2="231.28" y2="364.1" stroke="#ececf0" stroke-width="1.1" />
<rect x="218.88" y="301.3" width="13.2" height="17.6" fill="rgba(0,0,0,0.35)" rx="4.5" filter="url(#blur)"/>
<rect x="217.68" y="299.7" width="13.2" height="17.6" fill="url(#hg)" rx="4.3" stroke="#333" stroke-width="1.2" />
<line x1="219.88" y1="308.5" x2="228.68" y2="308.5" stroke="#585c66" stroke-width="0.9" />
<rect x="237.34" y="267.1" width="16" height="8.9" fill="#ff4030" rx="2" filter="url(#glow)" opacity="0.7"/>
<rect x="238.34" y="268.1" width="14" height="6.9" fill="url(#mr)" />
<text x="245.34" y="274.1" font-size="6.4" fill="#d43222" font-family="DejaVu Sans, sans-serif" text-anchor="middle" stroke="#d43222" stroke-width="0.35" >M</text>
<rect x="238.34" y="278.1" width="14" height="6.9" fill="url(#mb)" />
<text x="245.34" y="284.1" font-size="6.4" fill="#33333c" font-family="DejaVu Sans, sans-serif" text-anchor="middle" stroke="#33333c" stroke-width="0.35" >S</text>
<rect x="238.34" y="288" width="14" height="7" fill="#0a4a18" />
<rect x="238.34" y="288" width="4.4" height="7" fill="#0d6a22" />
<rect x="243.24" y="288" width="4.4" height="7" fill="#16d238" />
<rect x="248.14" y="288" width="4.2" height="7" fill="#0d6a22" />
<rect x="240.54" y="288" width="2.2" height="7" fill="#128a2c" />
<rect x="248.14" y="288" width="2" height="7" fill="#128a2c" />
<polygon points="244.34,364.1 251.34,308.5 244.34,308.5" fill="rgba(255,255,255,0.41)" />
<line x1="244.34" y1="299.1" x2="244.34" y2="372.1" stroke="#ececf0" stroke-width="2" />
<line x1="237.34" y1="308.5" x2="251.34" y2="308.5" stroke="#ececf0" stroke-width="1.1" />
<line x1="237.34" y1="364.1" x2="251.34" y2="364.1" stroke="#ececf0" stroke-width="1.1" />
<rect x="238.94" y="301.3" width="13.2" height="17.6" fill="rgba(0,0,0,0.35)" rx="4.5" filter="url(#blur)"/>
<rect x="237.74" y="299.7" width="13.2" height="17.6" fill="url(#hg)" rx="4.3" stroke="#333" stroke-width="1.2" />
<line x1="239.94" y1="308.5" x2="248.74" y2="308.5" stroke="#585c66" stroke-width="0.9" />
<rect x="257.4" y="267.1" width="16" height="8.9" fill="#ff4030" rx="2" filter="url(#glow)" opacity="0.7"/>
<rect x="258.4" y="268.1" width="14" height="6.9" fill="url(#mr)" />
<text x="265.4" y="274.1" font-size="6.4" fill="#d43222" font-family="DejaVu Sans, sans-serif" text-anchor="middle" stroke="#d43222" stroke-width="0.35" >M</text>
<rect x="258.4" y="278.1" width="14" height="6.9" fill="url(#mb)" />
<text x="265.4" y="284.1" font-size="6.4" fill="#33333c" font-family="DejaVu Sans, sans-serif" text-anchor="middle" stroke="#33333c" stroke-width="0.35" >S</text>
<rect x="258.4" y="288" width="14" height="7" fill="#0a4a18" />
<rect x="258.4" y="288" width="4.4" height="7" fill="#0d6a22" />
<rect x="263.3" y="288" width="4.4" height="7" fill="#16d238" />
<rect x="268.2" y="288" width="4.2" height="7" fill="#0d6a22" />
<rect x="260.6" y="288" width="2.2" height="7" fill="#128a2c" />
<rect x="268.2" y="288" width="2" height="7" fill="#128a2c" />
<polygon points="264.4,364.1 271.4,308.5 264.4,308.5" fill="rgba(255,255,255,0.41)" />
<line x1="264.4" y1="299.1" x2="264.4" y2="372.1" stroke="#ececf0" stroke-width="2" />
<line x1="257.4" y1="308.5" x2="271.4" y2="308.5" stroke="#ececf0" stroke-width="1.1" />
<line x1="257.4" y1="364.1" x2="271.4" y2="364.1" stroke="#ececf0" stroke-width="1.1" />
<rect x="259" y="301.3" width="13.2" height="17.6" fill="rgba(0,0,0,0.35)" rx="4.5" filter="url(#blur)"/>
<rect x="257.8" y="299.7" width="13.2" height="17.6" fill="url(#hg)" rx="4.3" stroke="#333" stroke-width="1.2" />
<line x1="260" y1="308.5" x2="268.8" y2="308.5" stroke="#585c66" stroke-width="0.9" />
<polygon points="284,364.1 277,364.1 284,336.3" fill="rgba(255,255,255,0.41)" />
<polygon points="284,336.3 291,308.5 284,308.5" fill="rgba(255,255,255,0.41)" />
<line x1="284" y1="299.1" x2="284" y2="372.1" stroke="#ececf0" stroke-width="2" />
<line x1="277" y1="308.5" x2="291" y2="308.5" stroke="#ececf0" stroke-width="1.1" />
<line x1="277" y1="364.1" x2="291" y2="364.1" stroke="#ececf0" stroke-width="1.1" />
<rect x="278.6" y="329.1" width="13.2" height="17.6" fill="rgba(0,0,0,0.35)" rx="4.5" filter="url(#blur)"/>
<rect x="277.4" y="327.5" width="13.2" height="17.6" fill="url(#hg)" rx="4.3" stroke="#333" stroke-width="1.2" />
<line x1="279.6" y1="336.3" x2="288.4" y2="336.3" stroke="#585c66" stroke-width="0.9" />
<text x="164.3" y="384.6" font-size="9.6" fill="#d6d6de" font-family="Liberation Sans, sans-serif" text-anchor="middle" stroke="#d6d6de" stroke-width="0.1" >1</text>
<text x="184.36" y="384.6" font-size="9.6" fill="#d6d6de" font-family="Liberation Sans, sans-serif" text-anchor="middle" stroke="#d6d6de" stroke-width="0.1" >2</text>
<text x="204.42" y="384.6" font-size="9.6" fill="#d6d6de" font-family="Liberation Sans, sans-serif" text-anchor="middle" stroke="#d6d6de" stroke-width="0.1" >3</text>
<text x="224.48" y="384.6" font-size="9.6" fill="#d6d6de" font-family="Liberation Sans, sans-serif" text-anchor="middle" stroke="#d6d6de" stroke-width="0.1" >1×2</text>
<text x="244.54" y="384.6" font-size="9.6" fill="#d6d6de" font-family="Liberation Sans, sans-serif" text-anchor="middle" stroke="#d6d6de" stroke-width="0.1" >2×3</text>
<text x="264.6" y="384.6" font-size="9.6" fill="#d6d6de" font-family="Liberation Sans, sans-serif" text-anchor="middle" stroke="#d6d6de" stroke-width="0.1" >N</text>
<text x="284.2" y="384.6" font-size="9.6" fill="#d6d6de" font-family="Liberation Sans, sans-serif" text-anchor="middle" textLength="19.5" lengthAdjust="spacingAndGlyphs" stroke="#d6d6de" stroke-width="0.2" >Gain</text>
<rect x="157" y="387.2" width="54" height="6.5" fill="#b2b2b6" />
<text x="184" y="393" font-size="6.2" fill="#50505a" font-family="DejaVu Sans, Liberation Sans, sans-serif" text-anchor="middle" font-weight="bold" >OSC</text>
<rect x="217" y="387.2" width="34" height="6.5" fill="#b2b2b6" />
<text x="234" y="393" font-size="6.2" fill="#50505a" font-family="DejaVu Sans, Liberation Sans, sans-serif" text-anchor="middle" font-weight="bold" >RING</text>
<rect x="301" y="262.8" width="146.4" height="132.3" fill="url(#pg)" rx="5.5" stroke="#4c4f5b" stroke-width="1" />
<rect x="309" y="275" width="41" height="8.8" fill="#dcdce0" />
<text x="329.5" y="282.8" font-size="9.6" fill="#333" font-family="Liberation Sans, sans-serif" text-anchor="middle" stroke="#333" stroke-width="0.2" >C 3</text>
<text x="309" y="294.8" font-size="9.2" fill="#d6d6de" font-family="Liberation Sans, sans-serif" textLength="40.4" lengthAdjust="spacingAndGlyphs" stroke="#d6d6de" stroke-width="0.3" >Keytrack</text>
<polygon points="319,364.1 312,364.1 319,336.3" fill="rgba(255,255,255,0.41)" />
<polygon points="319,336.3 326,308.5 319,308.5" fill="rgba(255,255,255,0.41)" />
<line x1="319" y1="299.1" x2="319" y2="372.1" stroke="#ececf0" stroke-width="2" />
<line x1="312" y1="308.5" x2="326" y2="308.5" stroke="#ececf0" stroke-width="1.1" />
<line x1="312" y1="364.1" x2="326" y2="364.1" stroke="#ececf0" stroke-width="1.1" />
<rect x="313.6" y="322.2" width="13.2" height="17.6" fill="rgba(0,0,0,0.35)" rx="4.5" filter="url(#blur)"/>
<rect x="312.4" y="320.6" width="13.2" height="17.6" fill="url(#hg)" rx="4.3" stroke="#333" stroke-width="1.2" />
<line x1="314.6" y1="329.4" x2="323.4" y2="329.4" stroke="#585c66" stroke-width="0.9" />
<polygon points="339.1,364.1 332.1,364.1 339.1,336.3" fill="rgba(255,255,255,0.41)" />
<polygon points="339.1,336.3 346.1,308.5 339.1,308.5" fill="rgba(255,255,255,0.41)" />
<line x1="339.1" y1="299.1" x2="339.1" y2="372.1" stroke="#ececf0" stroke-width="2" />
<line x1="332.1" y1="308.5" x2="346.1" y2="308.5" stroke="#ececf0" stroke-width="1.1" />
<line x1="332.1" y1="364.1" x2="346.1" y2="364.1" stroke="#ececf0" stroke-width="1.1" />
<rect x="333.7" y="329.1" width="13.2" height="17.6" fill="rgba(0,0,0,0.35)" rx="4.5" filter="url(#blur)"/>
<rect x="332.5" y="327.5" width="13.2" height="17.6" fill="url(#hg)" rx="4.3" stroke="#333" stroke-width="1.2" />
<line x1="334.7" y1="336.3" x2="343.5" y2="336.3" stroke="#585c66" stroke-width="0.9" />
<polygon points="363.7,364.1 356.7,364.1 363.7,336.3" fill="rgba(255,255,255,0.41)" />
<polygon points="363.7,336.3 370.7,308.5 363.7,308.5" fill="rgba(255,255,255,0.41)" />
<line x1="363.7" y1="299.1" x2="363.7" y2="372.1" stroke="#ececf0" stroke-width="2" />
<line x1="356.7" y1="308.5" x2="370.7" y2="308.5" stroke="#ececf0" stroke-width="1.1" />
<line x1="356.7" y1="364.1" x2="370.7" y2="364.1" stroke="#ececf0" stroke-width="1.1" />
<rect x="358.3" y="324" width="13.2" height="17.6" fill="rgba(0,0,0,0.35)" rx="4.5" filter="url(#blur)"/>
<rect x="357.1" y="322.4" width="13.2" height="17.6" fill="url(#hg)" rx="4.3" stroke="#333" stroke-width="1.2" />
<line x1="359.3" y1="331.2" x2="368.1" y2="331.2" stroke="#585c66" stroke-width="0.9" />
<polygon points="310.8,378.2 310.8,384 314.2,381.1" fill="#d6d6de" />
<text x="320.6" y="384.6" font-size="9.6" fill="#d6d6de" font-family="Liberation Sans, sans-serif" text-anchor="middle" stroke="#d6d6de" stroke-width="0.2" >F1</text>
<polygon points="330.9,378.2 330.9,384 334.3,381.1" fill="#d6d6de" />
<text x="340.7" y="384.6" font-size="9.6" fill="#d6d6de" font-family="Liberation Sans, sans-serif" text-anchor="middle" stroke="#d6d6de" stroke-width="0.2" >F2</text>
<text x="363.4" y="384.6" font-size="9.6" fill="#d6d6de" font-family="Liberation Sans, sans-serif" text-anchor="middle" stroke="#d6d6de" stroke-width="0.2" >HP</text>
<rect x="382.5" y="283" width="60.2" height="107.4" fill="#52555f" rx="4" />
<text x="385" y="293.8" font-size="9.2" fill="#c4c4cc" font-family="Liberation Sans, sans-serif" textLength="56" lengthAdjust="spacingAndGlyphs" stroke="#c4c4cc" stroke-width="0.3" >Waveshaper</text>
<rect x="387.2" y="312.2" width="30.2" height="48.4" fill="#33343c" />
<rect x="388" y="313.2" width="28.4" height="6.5" fill="#ff9a3a" />
<text x="402.2" y="319.1" font-size="6" fill="#fff" font-family="DejaVu Sans, Liberation Sans, sans-serif" text-anchor="middle" font-weight="bold" textLength="12" lengthAdjust="spacingAndGlyphs" >OFF</text>
<rect x="388" y="321.22" width="28.4" height="6.5" fill="#a06b3c" />
<text x="402.2" y="327.12" font-size="6" fill="#fff" font-family="DejaVu Sans, Liberation Sans, sans-serif" text-anchor="middle" font-weight="bold" textLength="17" lengthAdjust="spacingAndGlyphs" >SOFT</text>
<rect x="388" y="329.24" width="28.4" height="6.5" fill="#a06b3c" />
<text x="402.2" y="335.14" font-size="6" fill="#fff" font-family="DejaVu Sans, Liberation Sans, sans-serif" text-anchor="middle" font-weight="bold" textLength="18.5" lengthAdjust="spacingAndGlyphs" >HARD</text>
<rect x="388" y="337.26" width="28.4" height="6.5" fill="#a06b3c" />
<text x="402.2" y="343.16" font-size="6" fill="#fff" font-family="DejaVu Sans, Liberation Sans, sans-serif" text-anchor="middle" font-weight="bold" textLength="24" lengthAdjust="spacingAndGlyphs" >ASSYM</text>
<rect x="388" y="345.28" width="28.4" height="6.5" fill="#a06b3c" />
<text x="402.2" y="351.18" font-size="6" fill="#fff" font-family="DejaVu Sans, Liberation Sans, sans-serif" text-anchor="middle" font-weight="bold" textLength="16" lengthAdjust="spacingAndGlyphs" >SINE</text>
<rect x="388" y="353.3" width="28.4" height="6.5" fill="#a06b3c" />
<text x="402.2" y="359.2" font-size="6" fill="#fff" font-family="DejaVu Sans, Liberation Sans, sans-serif" text-anchor="middle" font-weight="bold" textLength="15" lengthAdjust="spacingAndGlyphs" >DIGI</text>
<polygon points="429,364.1 422,364.1 429,336.3" fill="rgba(255,255,255,0.41)" />
<polygon points="429,336.3 436,308.5 429,308.5" fill="rgba(255,255,255,0.41)" />
<line x1="429" y1="299.1" x2="429" y2="372.1" stroke="#ececf0" stroke-width="2" />
<line x1="422" y1="308.5" x2="436" y2="308.5" stroke="#ececf0" stroke-width="1.1" />
<line x1="422" y1="364.1" x2="436" y2="364.1" stroke="#ececf0" stroke-width="1.1" />
<rect x="423.6" y="327" width="13.2" height="17.6" fill="rgba(0,0,0,0.35)" rx="4.5" filter="url(#blur)"/>
<rect x="422.4" y="325.4" width="13.2" height="17.6" fill="url(#hg)" rx="4.3" stroke="#333" stroke-width="1.2" />
<line x1="424.6" y1="334.2" x2="433.4" y2="334.2" stroke="#585c66" stroke-width="0.9" />
<rect x="423.4" y="376" width="10.6" height="10.7" fill="#222" stroke="#ff9a3a" stroke-width="1.1" />
<line x1="424" y1="381.3" x2="433.4" y2="381.3" stroke="#ff9a3a" stroke-width="0.6" />
<line x1="428.7" y1="376.5" x2="428.7" y2="386.2" stroke="#ff9a3a" stroke-width="0.6" />
<path d="M425.2 383.8 h2 q1.2 0 1.5 -1.2 l0.6 -2.6 q0.3 -1.2 1.5 -1.2 h1.6" stroke="#fff" stroke-width="1.2" fill="none" />
<rect x="451" y="262.8" width="146.6" height="132.3" fill="url(#pg)" rx="5.5" stroke="#4c4f5b" stroke-width="1" />
<rect x="459" y="269.3" width="79.6" height="14.9" fill="#62646f" />
<rect x="466.1" y="269.3" width="5.8" height="14.9" fill="#a27a50" />
<rect x="486" y="269.3" width="5.8" height="14.9" fill="#a27a50" />
<rect x="526.2" y="269.3" width="5.8" height="14.9" fill="#a27a50" />
<path d="M459.5 284.2 L478.5 270.4 Q486 276.6 499.3 277 L518.4 277 Q529 277.6 538.3 284.2 Z" fill="rgba(232,232,240,0.74)"/>
<rect x="499.3" y="277" width="19.1" height="7.2" fill="rgba(120,125,145,0.5)" />
<rect x="552.4" y="269.5" width="33.4" height="15" fill="#11346f" stroke="#1d58c6" stroke-width="1.3" />
<text x="569" y="280.4" font-size="9.6" fill="#2862d2" font-family="Liberation Sans, sans-serif" text-anchor="middle" textLength="24" lengthAdjust="spacingAndGlyphs" stroke="#2862d2" stroke-width="0.15" >Route</text>
<line x1="462" y1="291.4" x2="500" y2="291.4" stroke="#d6d6de" stroke-width="1" />
<line x1="548.3" y1="291.4" x2="586" y2="291.4" stroke="#d6d6de" stroke-width="1" />
<text x="503.5" y="294.6" font-size="9.2" fill="#d6d6de" font-family="Liberation Sans, sans-serif" textLength="41.8" lengthAdjust="spacingAndGlyphs" stroke="#d6d6de" stroke-width="0.3" >Filter EG</text>
<polygon points="468.8,364.1 475.8,308.5 468.8,308.5" fill="rgba(150,165,230,0.38)" />
<line x1="468.8" y1="299.1" x2="468.8" y2="372.1" stroke="#b2bae6" stroke-width="2" />
<line x1="461.8" y1="308.5" x2="475.8" y2="308.5" stroke="#b2bae6" stroke-width="1.1" />
<line x1="461.8" y1="364.1" x2="475.8" y2="364.1" stroke="#b2bae6" stroke-width="1.1" />
<rect x="463.4" y="347.2" width="13.2" height="17.6" fill="rgba(0,0,0,0.35)" rx="4.5" filter="url(#blur)"/>
<rect x="462.2" y="345.6" width="13.2" height="17.6" fill="url(#hg)" rx="4.3" stroke="#333" stroke-width="1.2" />
<line x1="464.4" y1="354.4" x2="473.2" y2="354.4" stroke="#585c66" stroke-width="0.9" />
<polygon points="489,364.1 496,308.5 489,308.5" fill="rgba(255,255,255,0.41)" />
<line x1="489" y1="299.1" x2="489" y2="372.1" stroke="#ececf0" stroke-width="2" />
<line x1="482" y1="308.5" x2="496" y2="308.5" stroke="#ececf0" stroke-width="1.1" />
<line x1="482" y1="364.1" x2="496" y2="364.1" stroke="#ececf0" stroke-width="1.1" />
<rect x="483.6" y="313.3" width="13.2" height="17.6" fill="rgba(0,0,0,0.35)" rx="4.5" filter="url(#blur)"/>
<rect x="482.4" y="311.7" width="13.2" height="17.6" fill="url(#hg)" rx="4.3" stroke="#333" stroke-width="1.2" />
<line x1="484.6" y1="320.5" x2="493.4" y2="320.5" stroke="#585c66" stroke-width="0.9" />
<polygon points="509,364.1 516,308.5 509,308.5" fill="rgba(255,255,255,0.41)" />
<line x1="509" y1="299.1" x2="509" y2="372.1" stroke="#ececf0" stroke-width="2" />
<line x1="502" y1="308.5" x2="516" y2="308.5" stroke="#ececf0" stroke-width="1.1" />
<line x1="502" y1="364.1" x2="516" y2="364.1" stroke="#ececf0" stroke-width="1.1" />
<rect x="503.6" y="357.1" width="13.2" height="17.6" fill="rgba(0,0,0,0.35)" rx="4.5" filter="url(#blur)"/>
<rect x="502.4" y="355.5" width="13.2" height="17.6" fill="url(#hg)" rx="4.3" stroke="#333" stroke-width="1.2" />
<line x1="504.6" y1="364.3" x2="513.4" y2="364.3" stroke="#585c66" stroke-width="0.9" />
<polygon points="529,364.1 536,308.5 529,308.5" fill="rgba(255,255,255,0.41)" />
<line x1="529" y1="299.1" x2="529" y2="372.1" stroke="#ececf0" stroke-width="2" />
<line x1="522" y1="308.5" x2="536" y2="308.5" stroke="#ececf0" stroke-width="1.1" />
<line x1="522" y1="364.1" x2="536" y2="364.1" stroke="#ececf0" stroke-width="1.1" />
<rect x="523.6" y="311.1" width="13.2" height="17.6" fill="rgba(0,0,0,0.35)" rx="4.5" filter="url(#blur)"/>
<rect x="522.4" y="309.5" width="13.2" height="17.6" fill="url(#hg)" rx="4.3" stroke="#333" stroke-width="1.2" />
<line x1="524.6" y1="318.3" x2="533.4" y2="318.3" stroke="#585c66" stroke-width="0.9" />
<polygon points="559,364.1 552,364.1 559,336.3" fill="rgba(255,255,255,0.41)" />
<polygon points="559,336.3 566,308.5 559,308.5" fill="rgba(255,255,255,0.41)" />
<line x1="559" y1="299.1" x2="559" y2="372.1" stroke="#ececf0" stroke-width="2" />
<line x1="552" y1="308.5" x2="566" y2="308.5" stroke="#ececf0" stroke-width="1.1" />
<line x1="552" y1="364.1" x2="566" y2="364.1" stroke="#ececf0" stroke-width="1.1" />
<rect x="553.6" y="322.2" width="13.2" height="17.6" fill="rgba(0,0,0,0.35)" rx="4.5" filter="url(#blur)"/>
<rect x="552.4" y="320.6" width="13.2" height="17.6" fill="url(#hg)" rx="4.3" stroke="#333" stroke-width="1.2" />
<line x1="554.6" y1="329.4" x2="563.4" y2="329.4" stroke="#585c66" stroke-width="0.9" />
<polygon points="579.2,364.1 572.2,364.1 579.2,336.3" fill="rgba(255,255,255,0.41)" />
<polygon points="579.2,336.3 586.2,308.5 579.2,308.5" fill="rgba(255,255,255,0.41)" />
<line x1="579.2" y1="299.1" x2="579.2" y2="372.1" stroke="#ececf0" stroke-width="2" />
<line x1="572.2" y1="308.5" x2="586.2" y2="308.5" stroke="#ececf0" stroke-width="1.1" />
<line x1="572.2" y1="364.1" x2="586.2" y2="364.1" stroke="#ececf0" stroke-width="1.1" />
<rect x="573.8" y="329.1" width="13.2" height="17.6" fill="rgba(0,0,0,0.35)" rx="4.5" filter="url(#blur)"/>
<rect x="572.6" y="327.5" width="13.2" height="17.6" fill="url(#hg)" rx="4.3" stroke="#333" stroke-width="1.2" />
<line x1="574.8" y1="336.3" x2="583.6" y2="336.3" stroke="#585c66" stroke-width="0.9" />
<text x="468.8" y="384.6" font-size="9.6" fill="#d6d6de" font-family="Liberation Sans, sans-serif" text-anchor="middle" stroke="#d6d6de" stroke-width="0.2" >A</text>
<text x="489" y="384.6" font-size="9.6" fill="#d6d6de" font-family="Liberation Sans, sans-serif" text-anchor="middle" stroke="#d6d6de" stroke-width="0.2" >D</text>
<text x="509" y="384.6" font-size="9.6" fill="#d6d6de" font-family="Liberation Sans, sans-serif" text-anchor="middle" stroke="#d6d6de" stroke-width="0.2" >S</text>
<text x="529" y="384.6" font-size="9.6" fill="#d6d6de" font-family="Liberation Sans, sans-serif" text-anchor="middle" stroke="#d6d6de" stroke-width="0.2" >R</text>
<polygon points="550.8,378.2 550.8,384 554.2,381.1" fill="#d6d6de" />
<text x="560.6" y="384.6" font-size="9.6" fill="#d6d6de" font-family="Liberation Sans, sans-serif" text-anchor="middle" stroke="#d6d6de" stroke-width="0.2" >F1</text>
<polygon points="571,378.2 571,384 574.4,381.1" fill="#d6d6de" />
<text x="580.8" y="384.6" font-size="9.6" fill="#d6d6de" font-family="Liberation Sans, sans-serif" text-anchor="middle" stroke="#d6d6de" stroke-width="0.2" >F2</text>
<rect x="600.5" y="262.8" width="147.2" height="132.3" fill="url(#pg)" rx="5.5" stroke="#4c4f5b" stroke-width="1" />
<rect x="609" y="269.3" width="79.6" height="14.9" fill="#62646f" />
<rect x="616.1" y="269.3" width="5.8" height="14.9" fill="#a27a50" />
<rect x="636" y="269.3" width="5.8" height="14.9" fill="#a27a50" />
<rect x="676.2" y="269.3" width="5.8" height="14.9" fill="#a27a50" />
<path d="M609.5 284.2 L628.5 270.4 Q636 276.6 649.3 277 L668.4 277 Q679 277.6 688.3 284.2 Z" fill="rgba(232,232,240,0.74)"/>
<rect x="649.3" y="277" width="19.1" height="7.2" fill="rgba(120,125,145,0.5)" />
<rect x="702.4" y="269.5" width="33.4" height="15" fill="#11346f" stroke="#1d58c6" stroke-width="1.3" />
<text x="719" y="280.4" font-size="9.6" fill="#2862d2" font-family="Liberation Sans, sans-serif" text-anchor="middle" textLength="24" lengthAdjust="spacingAndGlyphs" stroke="#2862d2" stroke-width="0.15" >Route</text>
<line x1="612" y1="291.4" x2="628.4" y2="291.4" stroke="#d6d6de" stroke-width="1" />
<line x1="672.7" y1="291.4" x2="686" y2="291.4" stroke="#d6d6de" stroke-width="1" />
<text x="631.4" y="294.6" font-size="9.2" fill="#d6d6de" font-family="Liberation Sans, sans-serif" textLength="38.8" lengthAdjust="spacingAndGlyphs" stroke="#d6d6de" stroke-width="0.3" >Amp EG</text>
<line x1="702" y1="291.4" x2="706.6" y2="291.4" stroke="#d6d6de" stroke-width="1" />
<line x1="731.7" y1="291.4" x2="736" y2="291.4" stroke="#d6d6de" stroke-width="1" />
<text x="709" y="294.6" font-size="9.2" fill="#d6d6de" font-family="Liberation Sans, sans-serif" textLength="20" lengthAdjust="spacingAndGlyphs" stroke="#d6d6de" stroke-width="0.3" >Amp</text>
<polygon points="618.8,364.1 625.8,308.5 618.8,308.5" fill="rgba(150,165,230,0.38)" />
<line x1="618.8" y1="299.1" x2="618.8" y2="372.1" stroke="#b2bae6" stroke-width="2" />
<line x1="611.8" y1="308.5" x2="625.8" y2="308.5" stroke="#b2bae6" stroke-width="1.1" />
<line x1="611.8" y1="364.1" x2="625.8" y2="364.1" stroke="#b2bae6" stroke-width="1.1" />
<rect x="613.4" y="320.9" width="13.2" height="17.6" fill="rgba(0,0,0,0.35)" rx="4.5" filter="url(#blur)"/>
<rect x="612.2" y="319.3" width="13.2" height="17.6" fill="url(#hg)" rx="4.3" stroke="#333" stroke-width="1.2" />
<line x1="614.4" y1="328.1" x2="623.2" y2="328.1" stroke="#585c66" stroke-width="0.9" />
<polygon points="638.9,364.1 645.9,308.5 638.9,308.5" fill="rgba(255,255,255,0.41)" />
<line x1="638.9" y1="299.1" x2="638.9" y2="372.1" stroke="#ececf0" stroke-width="2" />
<line x1="631.9" y1="308.5" x2="645.9" y2="308.5" stroke="#ececf0" stroke-width="1.1" />
<line x1="631.9" y1="364.1" x2="645.9" y2="364.1" stroke="#ececf0" stroke-width="1.1" />
<rect x="633.5" y="331.1" width="13.2" height="17.6" fill="rgba(0,0,0,0.35)" rx="4.5" filter="url(#blur)"/>
<rect x="632.3" y="329.5" width="13.2" height="17.6" fill="url(#hg)" rx="4.3" stroke="#333" stroke-width="1.2" />
<line x1="634.5" y1="338.3" x2="643.3" y2="338.3" stroke="#585c66" stroke-width="0.9" />
<polygon points="659,364.1 666,308.5 659,308.5" fill="rgba(255,255,255,0.41)" />
<line x1="659" y1="299.1" x2="659" y2="372.1" stroke="#ececf0" stroke-width="2" />
<line x1="652" y1="308.5" x2="666" y2="308.5" stroke="#ececf0" stroke-width="1.1" />
<line x1="652" y1="364.1" x2="666" y2="364.1" stroke="#ececf0" stroke-width="1.1" />
<rect x="653.6" y="301.4" width="13.2" height="17.6" fill="rgba(0,0,0,0.35)" rx="4.5" filter="url(#blur)"/>
<rect x="652.4" y="299.8" width="13.2" height="17.6" fill="url(#hg)" rx="4.3" stroke="#333" stroke-width="1.2" />
<line x1="654.6" y1="308.6" x2="663.4" y2="308.6" stroke="#585c66" stroke-width="0.9" />
<polygon points="679,364.1 686,308.5 679,308.5" fill="rgba(150,165,230,0.38)" />
<line x1="679" y1="299.1" x2="679" y2="372.1" stroke="#b2bae6" stroke-width="2" />
<line x1="672" y1="308.5" x2="686" y2="308.5" stroke="#b2bae6" stroke-width="1.1" />
<line x1="672" y1="364.1" x2="686" y2="364.1" stroke="#b2bae6" stroke-width="1.1" />
<rect x="673.6" y="316.1" width="13.2" height="17.6" fill="rgba(0,0,0,0.35)" rx="4.5" filter="url(#blur)"/>
<rect x="672.4" y="314.5" width="13.2" height="17.6" fill="url(#hg)" rx="4.3" stroke="#333" stroke-width="1.2" />
<line x1="674.6" y1="323.3" x2="683.4" y2="323.3" stroke="#585c66" stroke-width="0.9" />
<polygon points="709.1,364.1 702.1,364.1 709.1,336.3" fill="rgba(255,255,255,0.41)" />
<polygon points="709.1,336.3 716.1,308.5 709.1,308.5" fill="rgba(255,255,255,0.41)" />
<line x1="709.1" y1="299.1" x2="709.1" y2="372.1" stroke="#ececf0" stroke-width="2" />
<line x1="702.1" y1="308.5" x2="716.1" y2="308.5" stroke="#ececf0" stroke-width="1.1" />
<line x1="702.1" y1="364.1" x2="716.1" y2="364.1" stroke="#ececf0" stroke-width="1.1" />
<rect x="703.7" y="324" width="13.2" height="17.6" fill="rgba(0,0,0,0.35)" rx="4.5" filter="url(#blur)"/>
<rect x="702.5" y="322.4" width="13.2" height="17.6" fill="url(#hg)" rx="4.3" stroke="#333" stroke-width="1.2" />
<line x1="704.7" y1="331.2" x2="713.5" y2="331.2" stroke="#585c66" stroke-width="0.9" />
<polygon points="729.2,364.1 736.2,308.5 729.2,308.5" fill="rgba(255,255,255,0.41)" />
<line x1="729.2" y1="299.1" x2="729.2" y2="372.1" stroke="#ececf0" stroke-width="2" />
<line x1="722.2" y1="308.5" x2="736.2" y2="308.5" stroke="#ececf0" stroke-width="1.1" />
<line x1="722.2" y1="364.1" x2="736.2" y2="364.1" stroke="#ececf0" stroke-width="1.1" />
<rect x="723.8" y="301.4" width="13.2" height="17.6" fill="rgba(0,0,0,0.35)" rx="4.5" filter="url(#blur)"/>
<rect x="722.6" y="299.8" width="13.2" height="17.6" fill="url(#hg)" rx="4.3" stroke="#333" stroke-width="1.2" />
<line x1="724.8" y1="308.6" x2="733.6" y2="308.6" stroke="#585c66" stroke-width="0.9" />
<text x="618.8" y="384.6" font-size="9.6" fill="#d6d6de" font-family="Liberation Sans, sans-serif" text-anchor="middle" stroke="#d6d6de" stroke-width="0.2" >A</text>
<text x="638.9" y="384.6" font-size="9.6" fill="#d6d6de" font-family="Liberation Sans, sans-serif" text-anchor="middle" stroke="#d6d6de" stroke-width="0.2" >D</text>
<text x="659" y="384.6" font-size="9.6" fill="#d6d6de" font-family="Liberation Sans, sans-serif" text-anchor="middle" stroke="#d6d6de" stroke-width="0.2" >S</text>
<text x="679" y="384.6" font-size="9.6" fill="#d6d6de" font-family="Liberation Sans, sans-serif" text-anchor="middle" stroke="#d6d6de" stroke-width="0.2" >R</text>
<text x="708.4" y="384.6" font-size="9.6" fill="#d6d6de" font-family="Liberation Sans, sans-serif" text-anchor="middle" textLength="19.5" lengthAdjust="spacingAndGlyphs" stroke="#d6d6de" stroke-width="0.2" >Gain</text>
<text x="728.3" y="384.6" font-size="9.6" fill="#d6d6de" font-family="Liberation Sans, sans-serif" text-anchor="middle" stroke="#d6d6de" stroke-width="0.2" >Vel</text>
<rect x="0" y="398" width="748" height="50" fill="#10306a" />
<rect x="0" y="398" width="748" height="1.4" fill="#2e7ef4" />
<rect x="0" y="446.3" width="748" height="1.6" fill="#2e7ef4" />
<rect x="0" y="447.9" width="748" height="0.4" fill="#000" />
<rect x="750" y="397.8" width="7.2" height="50.6" fill="#3a8cf6" />
<text transform="translate(751 411.8) rotate(90)" font-size="6.8" fill="#0a1e40" font-family="DejaVu Sans, Liberation Sans, sans-serif" font-weight="bold" stroke="#0a1e40" stroke-width="0.35" textLength="22.3" lengthAdjust="spacingAndGlyphs">ROUTE</text>
<rect x="-0.5" y="401.1" width="73" height="12.2" fill="#13386f" stroke="#276ce2" stroke-width="1" />
<text x="36" y="410.7" font-size="9.4" fill="#4a92fa" font-family="Liberation Sans, sans-serif" text-anchor="middle" stroke="#4a92fa" stroke-width="0.12" >Velocity</text>
<rect x="75.5" y="401.1" width="72" height="12.2" fill="#13386f" stroke="#276ce2" stroke-width="1" />
<text x="111.5" y="410.7" font-size="9.4" fill="#2459b0" font-family="Liberation Sans, sans-serif" text-anchor="middle" stroke="#2459b0" stroke-width="0.12" >Keytrack</text>
<rect x="150.5" y="401.1" width="72" height="12.2" fill="#13386f" stroke="#276ce2" stroke-width="1" />
<text x="186.5" y="410.7" font-size="9.4" fill="#2459b0" font-family="Liberation Sans, sans-serif" text-anchor="middle" stroke="#2459b0" stroke-width="0.12" >Poly AT</text>
<rect x="225.5" y="401.1" width="72" height="12.2" fill="#13386f" stroke="#276ce2" stroke-width="1" />
<text x="261.5" y="410.7" font-size="9.4" fill="#2459b0" font-family="Liberation Sans, sans-serif" text-anchor="middle" stroke="#2459b0" stroke-width="0.12" >Chan. AT</text>
<rect x="300.5" y="401.1" width="72" height="12.2" fill="#13386f" stroke="#276ce2" stroke-width="1" />
<text x="336.5" y="410.7" font-size="9.4" fill="#2459b0" font-family="Liberation Sans, sans-serif" text-anchor="middle" stroke="#2459b0" stroke-width="0.12" >Pitchbend</text>
<rect x="375.5" y="401.1" width="72" height="12.2" fill="#13386f" stroke="#276ce2" stroke-width="1" />
<text x="411.5" y="410.7" font-size="9.4" fill="#2459b0" font-family="Liberation Sans, sans-serif" text-anchor="middle" stroke="#2459b0" stroke-width="0.12" >Modwheel</text>
<rect x="-0.5" y="416.5" width="73" height="13.1" fill="#13386f" stroke="#4a94ff" stroke-width="1.4" />
<text x="36" y="427" font-size="9.4" fill="#4a92fa" font-family="Liberation Sans, sans-serif" text-anchor="middle" stroke="#4a92fa" stroke-width="0.12" >LFO 1</text>
<path d="M66.9 420.45 v3.6 h-2.1 l3.5 4.6 l3.5 -4.6 h-2.1 v-3.6 z" stroke="#ff981c" stroke-width="1.2" fill="none" />
<rect x="75.5" y="416.5" width="72" height="13.1" fill="#13386f" stroke="#276ce2" stroke-width="1" />
<text x="111.5" y="427" font-size="9.4" fill="#4a92fa" font-family="Liberation Sans, sans-serif" text-anchor="middle" stroke="#4a92fa" stroke-width="0.12" >LFO 2</text>
<line x1="142.8" y1="421.25" x2="142.8" y2="425.45" stroke="#4a92fa" stroke-width="1.3" />
<polygon points="140.5,424.05 145.1,424.05 142.8,426.85" fill="#4a92fa" />
<rect x="150.5" y="416.5" width="72" height="13.1" fill="#13386f" stroke="#276ce2" stroke-width="1" />
<text x="186.5" y="427" font-size="9.4" fill="#2459b0" font-family="Liberation Sans, sans-serif" text-anchor="middle" stroke="#2459b0" stroke-width="0.12" >LFO 3</text>
<line x1="217.8" y1="421.25" x2="217.8" y2="425.45" stroke="#3f86f2" stroke-width="1.3" />
<polygon points="215.5,424.05 220.1,424.05 217.8,426.85" fill="#3f86f2" />
<rect x="225.5" y="416.5" width="72" height="13.1" fill="#13386f" stroke="#276ce2" stroke-width="1" />
<text x="261.5" y="427" font-size="9.4" fill="#2459b0" font-family="Liberation Sans, sans-serif" text-anchor="middle" stroke="#2459b0" stroke-width="0.12" >LFO 4</text>
<line x1="292.8" y1="421.25" x2="292.8" y2="425.45" stroke="#3f86f2" stroke-width="1.3" />
<polygon points="290.5,424.05 295.1,424.05 292.8,426.85" fill="#3f86f2" />
<rect x="300.5" y="416.5" width="72" height="13.1" fill="#13386f" stroke="#276ce2" stroke-width="1" />
<text x="336.5" y="427" font-size="9.4" fill="#2459b0" font-family="Liberation Sans, sans-serif" text-anchor="middle" stroke="#2459b0" stroke-width="0.12" >LFO 5</text>
<line x1="367.8" y1="421.25" x2="367.8" y2="425.45" stroke="#3f86f2" stroke-width="1.3" />
<polygon points="365.5,424.05 370.1,424.05 367.8,426.85" fill="#3f86f2" />
<rect x="375.5" y="416.5" width="72" height="13.1" fill="#13386f" stroke="#276ce2" stroke-width="1" />
<text x="411.5" y="427" font-size="9.4" fill="#2459b0" font-family="Liberation Sans, sans-serif" text-anchor="middle" stroke="#2459b0" stroke-width="0.12" >LFO 6</text>
<line x1="442.8" y1="421.25" x2="442.8" y2="425.45" stroke="#3f86f2" stroke-width="1.3" />
<polygon points="440.5,424.05 445.1,424.05 442.8,426.85" fill="#3f86f2" />
<rect x="-0.5" y="432.4" width="73" height="12.8" fill="#13386f" stroke="#276ce2" stroke-width="1" />
<text x="36" y="442.6" font-size="9.4" fill="#2459b0" font-family="Liberation Sans, sans-serif" text-anchor="middle" stroke="#2459b0" stroke-width="0.12" >SLFO 1</text>
<line x1="67.8" y1="437" x2="67.8" y2="441.2" stroke="#3f86f2" stroke-width="1.3" />
<polygon points="65.5,439.8 70.1,439.8 67.8,442.6" fill="#3f86f2" />
<rect x="75.5" y="432.4" width="72" height="12.8" fill="#13386f" stroke="#276ce2" stroke-width="1" />
<text x="111.5" y="442.6" font-size="9.4" fill="#2459b0" font-family="Liberation Sans, sans-serif" text-anchor="middle" stroke="#2459b0" stroke-width="0.12" >SLFO 2</text>
<line x1="142.8" y1="437" x2="142.8" y2="441.2" stroke="#3f86f2" stroke-width="1.3" />
<polygon points="140.5,439.8 145.1,439.8 142.8,442.6" fill="#3f86f2" />
<rect x="150.5" y="432.4" width="72" height="12.8" fill="#13386f" stroke="#276ce2" stroke-width="1" />
<text x="186.5" y="442.6" font-size="9.4" fill="#2459b0" font-family="Liberation Sans, sans-serif" text-anchor="middle" stroke="#2459b0" stroke-width="0.12" >SLFO 3</text>
<line x1="217.8" y1="437" x2="217.8" y2="441.2" stroke="#3f86f2" stroke-width="1.3" />
<polygon points="215.5,439.8 220.1,439.8 217.8,442.6" fill="#3f86f2" />
<rect x="225.5" y="432.4" width="72" height="12.8" fill="#13386f" stroke="#276ce2" stroke-width="1" />
<text x="261.5" y="442.6" font-size="9.4" fill="#2459b0" font-family="Liberation Sans, sans-serif" text-anchor="middle" stroke="#2459b0" stroke-width="0.12" >SLFO 4</text>
<line x1="292.8" y1="437" x2="292.8" y2="441.2" stroke="#3f86f2" stroke-width="1.3" />
<polygon points="290.5,439.8 295.1,439.8 292.8,442.6" fill="#3f86f2" />
<rect x="300.5" y="432.4" width="72" height="12.8" fill="#13386f" stroke="#276ce2" stroke-width="1" />
<text x="336.5" y="442.6" font-size="9.4" fill="#2459b0" font-family="Liberation Sans, sans-serif" text-anchor="middle" stroke="#2459b0" stroke-width="0.12" >SLFO 5</text>
<line x1="367.8" y1="437" x2="367.8" y2="441.2" stroke="#3f86f2" stroke-width="1.3" />
<polygon points="365.5,439.8 370.1,439.8 367.8,442.6" fill="#3f86f2" />
<rect x="375.5" y="432.4" width="72" height="12.8" fill="#13386f" stroke="#276ce2" stroke-width="1" />
<text x="411.5" y="442.6" font-size="9.4" fill="#2459b0" font-family="Liberation Sans, sans-serif" text-anchor="middle" stroke="#2459b0" stroke-width="0.12" >SLFO 6</text>
<line x1="442.8" y1="437" x2="442.8" y2="441.2" stroke="#3f86f2" stroke-width="1.3" />
<polygon points="440.5,439.8 445.1,439.8 442.8,442.6" fill="#3f86f2" />
<rect x="450.9" y="400.9" width="71.3" height="20.4" fill="#2a7cf4" stroke="#4a94ff" stroke-width="1" />
<rect x="452.6" y="413.8" width="67.9" height="6.2" fill="#1a4a9a" />
<rect x="486.3" y="413.8" width="11.7" height="6.2" fill="#4a94ff" />
<text x="486.55" y="410.7" font-size="9.4" fill="#0a2a66" font-family="Liberation Sans, sans-serif" text-anchor="middle" stroke="#0a2a66" stroke-width="0.2" >Cutoff</text>
<rect x="525.5" y="400.9" width="71.6" height="20.4" fill="#13386f" stroke="#276ce2" stroke-width="1" />
<rect x="527.2" y="413.8" width="68.2" height="6.2" fill="#1c4fa8" />
<rect x="527.5" y="413.8" width="23.3" height="6.2" fill="#2f7ff6" />
<text x="561.3" y="410.7" font-size="9.4" fill="#3f86f2" font-family="Liberation Sans, sans-serif" text-anchor="middle" stroke="#3f86f2" stroke-width="0.2" >Uni Spread</text>
<rect x="601.1" y="400.9" width="71.1" height="20.4" fill="#13386f" stroke="#276ce2" stroke-width="1" />
<rect x="602.8" y="413.8" width="67.7" height="6.2" fill="#1c4fa8" />
<text x="636.65" y="410.7" font-size="9.4" fill="#3f86f2" font-family="Liberation Sans, sans-serif" text-anchor="middle" stroke="#3f86f2" stroke-width="0.2" >Speed</text>
<rect x="675.5" y="400.9" width="71.5" height="20.4" fill="#13386f" stroke="#276ce2" stroke-width="1" />
<rect x="677.2" y="413.8" width="68.1" height="6.2" fill="#1c4fa8" />
<rect x="711" y="413.8" width="1" height="6.2" fill="#2f7ff6" />
<text x="711.25" y="410.7" font-size="9.4" fill="#3f86f2" font-family="Liberation Sans, sans-serif" text-anchor="middle" stroke="#3f86f2" stroke-width="0.2" >Formant</text>
<rect x="450.9" y="424.7" width="71.3" height="20.3" fill="#13386f" stroke="#276ce2" stroke-width="1" />
<rect x="452.6" y="437.6" width="67.9" height="6.2" fill="#1c4fa8" />
<text x="486.55" y="434.5" font-size="9.4" fill="#3f86f2" font-family="Liberation Sans, sans-serif" text-anchor="middle" stroke="#3f86f2" stroke-width="0.2" >Shape</text>
<rect x="525.5" y="424.7" width="71.6" height="20.3" fill="#13386f" stroke="#276ce2" stroke-width="1" />
<rect x="527.2" y="437.6" width="68.2" height="6.2" fill="#1c4fa8" />
<text x="561.3" y="434.5" font-size="9.4" fill="#2459b0" font-family="Liberation Sans, sans-serif" text-anchor="middle" stroke="#2459b0" stroke-width="0.2" >-</text>
<rect x="601.1" y="424.7" width="71.1" height="20.3" fill="#13386f" stroke="#276ce2" stroke-width="1" />
<rect x="602.8" y="437.6" width="67.7" height="6.2" fill="#1c4fa8" />
<text x="636.65" y="434.5" font-size="9.4" fill="#2459b0" font-family="Liberation Sans, sans-serif" text-anchor="middle" stroke="#2459b0" stroke-width="0.2" >-</text>
<rect x="675.5" y="424.7" width="71.5" height="20.3" fill="#13386f" stroke="#276ce2" stroke-width="1" />
<rect x="677.2" y="437.6" width="68.1" height="6.2" fill="#1c4fa8" />
<text x="711.25" y="434.5" font-size="9.4" fill="#2459b0" font-family="Liberation Sans, sans-serif" text-anchor="middle" stroke="#2459b0" stroke-width="0.2" >-</text>
<rect x="0" y="450.3" width="748" height="92" fill="#ff9000" />
<rect x="750" y="450.3" width="7.2" height="92" fill="#ff9000" />
<text transform="translate(751 472.7) rotate(90)" font-size="6.8" fill="#000" font-family="DejaVu Sans, Liberation Sans, sans-serif" font-weight="bold" stroke="#000" stroke-width="0.35" textLength="45.5" lengthAdjust="spacingAndGlyphs">MODULATION</text>
<polygon points="18.2,464.3 129.8,458.1 129.8,464.3" fill="rgba(158,158,170,0.95)" />
<line x1="13" y1="464.3" x2="135.4" y2="464.3" stroke="#000" stroke-width="2" />
<line x1="18.2" y1="457.3" x2="18.2" y2="471.3" stroke="#000" stroke-width="1.2" />
<line x1="129.8" y1="457.3" x2="129.8" y2="471.3" stroke="#000" stroke-width="1.2" />
<text x="127.6" y="474.1" font-size="9.3" fill="#000" font-family="Liberation Sans, sans-serif" text-anchor="end" stroke="#000" stroke-width="0.08" >Rate</text>
<rect x="77.4" y="459.2" width="18.4" height="13.4" fill="rgba(0,0,0,0.35)" rx="4.5" filter="url(#blur)"/>
<rect x="76.2" y="457.6" width="18.4" height="13.4" fill="url(#hg)" rx="4.3" stroke="#333" stroke-width="1.2" />
<line x1="85.4" y1="459.9" x2="85.4" y2="468.7" stroke="#585c66" stroke-width="0.9" />
<polygon points="18.2,485.3 129.8,479.1 129.8,485.3" fill="rgba(158,158,170,0.95)" />
<line x1="13" y1="485.3" x2="135.4" y2="485.3" stroke="#000" stroke-width="2" />
<line x1="129.8" y1="478.3" x2="129.8" y2="492.3" stroke="#000" stroke-width="1.2" />
<text x="127.6" y="494.8" font-size="9.3" fill="#000" font-family="Liberation Sans, sans-serif" text-anchor="end" stroke="#000" stroke-width="0.08" >Phase / Shuffle</text>
<rect x="10.4" y="480.2" width="18.4" height="13.4" fill="rgba(0,0,0,0.35)" rx="4.5" filter="url(#blur)"/>
<rect x="9.2" y="478.6" width="18.4" height="13.4" fill="url(#hg)" rx="4.3" stroke="#333" stroke-width="1.2" />
<line x1="18.4" y1="480.9" x2="18.4" y2="489.7" stroke="#585c66" stroke-width="0.9" />
<polygon points="18.2,505.5 129.8,499.3 129.8,505.5" fill="rgba(158,158,170,0.95)" />
<line x1="13" y1="505.5" x2="135.4" y2="505.5" stroke="#000" stroke-width="2" />
<line x1="18.2" y1="498.5" x2="18.2" y2="512.5" stroke="#000" stroke-width="1.2" />
<text x="127.6" y="515.7" font-size="9.3" fill="#000" font-family="Liberation Sans, sans-serif" text-anchor="end" stroke="#000" stroke-width="0.08" >Magnitude</text>
<rect x="122.2" y="500.4" width="18.4" height="13.4" fill="rgba(0,0,0,0.35)" rx="4.5" filter="url(#blur)"/>
<rect x="121" y="498.8" width="18.4" height="13.4" fill="url(#hg)" rx="4.3" stroke="#333" stroke-width="1.2" />
<line x1="130.2" y1="501.1" x2="130.2" y2="509.9" stroke="#585c66" stroke-width="0.9" />
<polygon points="18.2,526.8 18.2,533 74,526.8" fill="rgba(158,158,170,0.95)" />
<polygon points="74,526.8 129.8,520.6 129.8,526.8" fill="rgba(158,158,170,0.95)" />
<line x1="13" y1="526.8" x2="135.4" y2="526.8" stroke="#000" stroke-width="2" />
<line x1="18.2" y1="519.8" x2="18.2" y2="533.8" stroke="#000" stroke-width="1.2" />
<line x1="129.8" y1="519.8" x2="129.8" y2="533.8" stroke="#000" stroke-width="1.2" />
<text x="127.6" y="537.1" font-size="9.3" fill="#000" font-family="Liberation Sans, sans-serif" text-anchor="end" stroke="#000" stroke-width="0.08" >Deform</text>
<rect x="66.2" y="521.7" width="18.4" height="13.4" fill="rgba(0,0,0,0.35)" rx="4.5" filter="url(#blur)"/>
<rect x="65" y="520.1" width="18.4" height="13.4" fill="url(#hg)" rx="4.3" stroke="#333" stroke-width="1.2" />
<line x1="74.2" y1="522.4" x2="74.2" y2="531.2" stroke="#585c66" stroke-width="0.9" />
<rect x="161.8" y="458.7" width="49.4" height="37.3" fill="#e6e6e8" rx="4" stroke="#77777f" stroke-width="1" />
<rect x="163.5" y="473.6" width="46" height="8.9" fill="#ff981c" />
<line x1="164" y1="472.4" x2="209" y2="472.4" stroke="#9c9cbc" stroke-width="0.7" />
<line x1="164" y1="483.8" x2="209" y2="483.8" stroke="#9c9cbc" stroke-width="0.7" />
<text x="186.5" y="468.6" font-size="9.2" fill="#111" font-family="Liberation Sans, sans-serif" text-anchor="middle" textLength="30" lengthAdjust="spacingAndGlyphs" stroke="#111" stroke-width="0.1" >Freerun</text>
<text x="186.5" y="480.8" font-size="9.2" fill="#111" font-family="Liberation Sans, sans-serif" text-anchor="middle" textLength="42" lengthAdjust="spacingAndGlyphs" stroke="#111" stroke-width="0.1" >Keytrigger</text>
<text x="186.5" y="492.5" font-size="9.2" fill="#111" font-family="Liberation Sans, sans-serif" text-anchor="middle" textLength="33" lengthAdjust="spacingAndGlyphs" stroke="#111" stroke-width="0.1" >Random</text>
<rect x="161.8" y="503" width="49.4" height="13.2" fill="#e6e6e8" rx="4" stroke="#77777f" stroke-width="1" />
<text x="186.5" y="513" font-size="9.4" fill="#111" font-family="Liberation Sans, sans-serif" text-anchor="middle" textLength="29.5" lengthAdjust="spacingAndGlyphs" stroke="#111" stroke-width="0.12" >Bipolar</text>
<rect x="237.8" y="455.9" width="49.6" height="81.9" fill="#e6e6e8" rx="4" stroke="#77777f" stroke-width="1" />
<rect x="239.6" y="457.3" width="46" height="7.6" fill="#ff981c" />
<text x="262.6" y="463.6" font-size="9.2" fill="#111" font-family="Liberation Sans, sans-serif" text-anchor="middle" stroke="#111" stroke-width="0.1" >Sine</text>
<text x="262.6" y="473.62" font-size="9.2" fill="#111" font-family="Liberation Sans, sans-serif" text-anchor="middle" stroke="#111" stroke-width="0.1" >Triangle</text>
<line x1="240" y1="466.02" x2="285.4" y2="466.02" stroke="#9c9cbc" stroke-width="0.7" />
<text x="262.6" y="483.64" font-size="9.2" fill="#111" font-family="Liberation Sans, sans-serif" text-anchor="middle" stroke="#111" stroke-width="0.1" >Square</text>
<line x1="240" y1="476.04" x2="285.4" y2="476.04" stroke="#9c9cbc" stroke-width="0.7" />
<text x="262.6" y="493.66" font-size="9.2" fill="#111" font-family="Liberation Sans, sans-serif" text-anchor="middle" stroke="#111" stroke-width="0.1" >Ramp</text>
<line x1="240" y1="486.06" x2="285.4" y2="486.06" stroke="#9c9cbc" stroke-width="0.7" />
<text x="262.6" y="503.68" font-size="9.2" fill="#111" font-family="Liberation Sans, sans-serif" text-anchor="middle" stroke="#111" stroke-width="0.1" >Noise</text>
<line x1="240" y1="496.08" x2="285.4" y2="496.08" stroke="#9c9cbc" stroke-width="0.7" />
<text x="262.6" y="513.7" font-size="9.2" fill="#111" font-family="Liberation Sans, sans-serif" text-anchor="middle" stroke="#111" stroke-width="0.1" >S&amp;H</text>
<line x1="240" y1="506.1" x2="285.4" y2="506.1" stroke="#9c9cbc" stroke-width="0.7" />
<text x="262.6" y="523.72" font-size="9.2" fill="#111" font-family="Liberation Sans, sans-serif" text-anchor="middle" stroke="#111" stroke-width="0.1" >Envelope</text>
<line x1="240" y1="516.12" x2="285.4" y2="516.12" stroke="#9c9cbc" stroke-width="0.7" />
<text x="262.6" y="533.74" font-size="9.2" fill="#111" font-family="Liberation Sans, sans-serif" text-anchor="middle" stroke="#111" stroke-width="0.1" >Stepseq</text>
<line x1="240" y1="526.14" x2="285.4" y2="526.14" stroke="#9c9cbc" stroke-width="0.7" />
<line x1="306.4" y1="462.4" x2="592.3" y2="462.4" stroke="rgba(120,60,0,0.35)" stroke-width="0.8" />
<line x1="306.4" y1="529.4" x2="592.3" y2="529.4" stroke="rgba(120,60,0,0.35)" stroke-width="0.8" />
<line x1="306.4" y1="496" x2="592.3" y2="496" stroke="rgba(0,0,0,0.4)" stroke-width="0.7" />
<line x1="333" y1="496" x2="592.3" y2="480.6" stroke="rgba(0,0,0,0.4)" stroke-width="0.7" />
<line x1="333" y1="496" x2="592.3" y2="511.4" stroke="rgba(0,0,0,0.4)" stroke-width="0.7" />
<polyline points="306.4,496 332.8,496 333.3,496 333.8,495.99 334.3,495.97 334.8,495.95 335.3,495.92 335.8,495.88 336.3,495.85 336.8,495.81 337.3,495.77 337.8,495.73 338.3,495.69 338.8,495.65 339.3,495.61 339.8,495.59 340.3,495.56 340.8,495.55 341.3,495.54 341.8,495.54 342.3,495.55 342.8,495.58 343.3,495.61 343.8,495.65 344.3,495.71 344.8,495.77 345.3,495.85 345.8,495.93 346.3,496.02 346.8,496.12 347.3,496.22 347.8,496.33 348.3,496.44 348.8,496.55 349.3,496.66 349.8,496.76 350.3,496.86 350.8,496.95 351.3,497.02 351.8,497.09 352.3,497.15 352.8,497.19 353.3,497.21 353.8,497.22 354.3,497.2 354.8,497.17 355.3,497.12 355.8,497.05 356.3,496.96 356.8,496.86 357.3,496.73 357.8,496.59 358.3,496.44 358.8,496.27 359.3,496.09 359.8,495.91 360.3,495.71 360.8,495.52 361.3,495.32 361.8,495.13 362.3,494.95 362.8,494.77 363.3,494.6 363.8,494.45 364.3,494.32 364.8,494.21 365.3,494.12 365.8,494.05 366.3,494.01 366.8,494 367.3,494.02 367.8,494.06 368.3,494.14 368.8,494.24 369.3,494.37 369.8,494.53 370.3,494.71 370.8,494.92 371.3,495.15 371.8,495.4 372.3,495.66 372.8,495.93 373.3,496.21 373.8,496.5 374.3,496.78 374.8,497.06 375.3,497.34 375.8,497.6 376.3,497.84 376.8,498.06 377.3,498.26 377.8,498.43 378.3,498.57 378.8,498.68 379.3,498.75 379.8,498.79 380.3,498.78 380.8,498.74 381.3,498.66 381.8,498.53 382.3,498.37 382.8,498.17 383.3,497.94 383.8,497.68 384.3,497.38 384.8,497.06 385.3,496.73 385.8,496.37 386.3,496 386.8,495.62 387.3,495.25 387.8,494.87 388.3,494.51 388.8,494.16 389.3,493.83 389.8,493.52 390.3,493.25 390.8,493 391.3,492.8 391.8,492.63 392.3,492.51 392.8,492.44 393.3,492.42 393.8,492.45 394.3,492.52 394.8,492.65 395.3,492.82 395.8,493.05 396.3,493.32 396.8,493.63 397.3,493.97 397.8,494.36 398.3,494.77 398.8,495.2 399.3,495.65 399.8,496.12 400.3,496.59 400.8,497.05 401.3,497.51 401.8,497.96 402.3,498.38 402.8,498.78 403.3,499.15 403.8,499.47 404.3,499.75 404.8,499.99 405.3,500.17 405.8,500.29 406.3,500.36 406.8,500.37 407.3,500.31 407.8,500.2 408.3,500.02 408.8,499.79 409.3,499.5 409.8,499.16 410.3,498.77 410.8,498.33 411.3,497.86 411.8,497.36 412.3,496.83 412.8,496.28 413.3,495.72 413.8,495.16 414.3,494.6 414.8,494.06 415.3,493.53 415.8,493.04 416.3,492.57 416.8,492.16 417.3,491.79 417.8,491.47 418.3,491.21 418.8,491.02 419.3,490.89 419.8,490.84 420.3,490.85 420.8,490.94 421.3,491.1 421.8,491.33 422.3,491.62 422.8,491.98 423.3,492.4 423.8,492.88 424.3,493.4 424.8,493.97 425.3,494.57 425.8,495.19 426.3,495.84 426.8,496.49 427.3,497.14 427.8,497.79 428.3,498.42 428.8,499.02 429.3,499.58 429.8,500.1 430.3,500.57 430.8,500.98 431.3,501.32 431.8,501.6 432.3,501.8 432.8,501.92 433.3,501.96 433.8,501.92 434.3,501.79 434.8,501.58 435.3,501.3 435.8,500.93 436.3,500.5 436.8,500 437.3,499.44 437.8,498.82 438.3,498.16 438.8,497.46 439.3,496.74 439.8,496 440.3,495.25 440.8,494.51 441.3,493.78 441.8,493.07 442.3,492.4 442.8,491.77 443.3,491.2 443.8,490.68 444.3,490.24 444.8,489.87 445.3,489.58 445.8,489.38 446.3,489.27 446.8,489.25 447.3,489.33 447.8,489.5 448.3,489.76 448.8,490.11 449.3,490.54 449.8,491.05 450.3,491.64 450.8,492.29 451.3,493 451.8,493.76 452.3,494.55 452.8,495.37 453.3,496.21 453.8,497.05 454.3,497.88 454.8,498.7 455.3,499.48 455.8,500.22 456.3,500.91 456.8,501.54 457.3,502.09 457.8,502.56 458.3,502.95 458.8,503.25 459.3,503.44 459.8,503.54 460.3,503.53 460.8,503.41 461.3,503.2 461.8,502.88 462.3,502.46 462.8,501.95 463.3,501.35 463.8,500.68 464.3,499.93 464.8,499.13 465.3,498.28 465.8,497.38 466.3,496.46 466.8,495.53 467.3,494.6 467.8,493.68 468.3,492.79 468.8,491.93 469.3,491.12 469.8,490.38 470.3,489.71 470.8,489.12 471.3,488.62 471.8,488.22 472.3,487.92 472.8,487.74 473.3,487.66 473.8,487.71 474.3,487.86 474.8,488.13 475.3,488.52 475.8,489.01 476.3,489.59 476.8,490.28 477.3,491.04 477.8,491.88 478.3,492.78 478.8,493.74 479.3,494.73 479.8,495.74 480.3,496.77 480.8,497.79 481.3,498.8 481.8,499.77 482.3,500.7 482.8,501.56 483.3,502.36 483.8,503.08 484.3,503.7 484.8,504.22 485.3,504.62 485.8,504.91 486.3,505.08 486.8,505.13 487.3,505.05 487.8,504.84 488.3,504.51 488.8,504.06 489.3,503.5 489.8,502.83 490.3,502.05 490.8,501.19 491.3,500.26 491.8,499.26 492.3,498.2 492.8,497.11 493.3,496 493.8,494.88 494.3,493.77 494.8,492.68 495.3,491.63 495.8,490.64 496.3,489.71 496.8,488.87 497.3,488.12 497.8,487.47 498.3,486.94 498.8,486.53 499.3,486.25 499.8,486.1 500.3,486.09 500.8,486.21 501.3,486.47 501.8,486.87 502.3,487.39 502.8,488.03 503.3,488.79 503.8,489.66 504.3,490.61 504.8,491.65 505.3,492.75 505.8,493.9 506.3,495.09 506.8,496.3 507.3,497.51 507.8,498.71 508.3,499.88 508.8,501 509.3,502.06 509.8,503.04 510.3,503.92 510.8,504.71 511.3,505.37 511.8,505.92 512.3,506.32 512.8,506.59 513.3,506.71 513.8,506.68 514.3,506.51 514.8,506.19 515.3,505.73 515.8,505.13 516.3,504.4 516.8,503.55 517.3,502.59 517.8,501.54 518.3,500.4 518.8,499.19 519.3,497.94 519.8,496.65 520.3,495.35 520.8,494.04 521.3,492.76 521.8,491.52 522.3,490.33 522.8,489.21 523.3,488.18 523.8,487.26 524.3,486.45 524.8,485.77 525.3,485.22 525.8,484.82 526.3,484.58 526.8,484.49 527.3,484.56 527.8,484.79 528.3,485.17 528.8,485.71 529.3,486.39 529.8,487.21 530.3,488.15 530.8,489.21 531.3,490.36 531.8,491.6 532.3,492.91 532.8,494.26 533.3,495.65 533.8,497.05 534.3,498.44 534.8,499.8 535.3,501.12 535.8,502.38 536.3,503.55 536.8,504.62 537.3,505.58 537.8,506.41 538.3,507.11 538.8,507.65 539.3,508.03 539.8,508.25 540.3,508.3 540.8,508.18 541.3,507.9 541.8,507.44 542.3,506.83 542.8,506.06 543.3,505.15 543.8,504.11 544.3,502.95 544.8,501.7 545.3,500.35 545.8,498.94 546.3,497.48 546.8,496 547.3,494.51 547.8,493.03 548.3,491.59 548.8,490.2 549.3,488.88 549.8,487.66 550.3,486.54 550.8,485.56 551.3,484.71 551.8,484.01 552.3,483.48 552.8,483.11 553.3,482.93 553.8,482.92 554.3,483.09 554.8,483.45 555.3,483.97 555.8,484.67 556.3,485.53 556.8,486.53 557.3,487.67 557.8,488.93 558.3,490.29 558.8,491.74 559.3,493.26 559.8,494.81 560.3,496.4 560.8,497.98 561.3,499.54 561.8,501.06 562.3,502.52 562.8,503.89 563.3,505.16 563.8,506.31 564.3,507.32 564.8,508.18 565.3,508.88 565.8,509.4 566.3,509.74 566.8,509.89 567.3,509.84 567.8,509.61 568.3,509.19 568.8,508.58 569.3,507.8 569.8,506.85 570.3,505.74 570.8,504.5 571.3,503.14 571.8,501.67 572.3,500.11 572.8,498.5 573.3,496.84 573.8,495.16 574.3,493.49 574.8,491.84 575.3,490.25 575.8,488.73 576.3,487.3 576.8,485.99 577.3,484.81 577.8,483.78 578.3,482.91 578.8,482.23 579.3,481.72 579.8,481.42 580.3,481.31 580.8,481.41 581.3,481.71 581.8,482.21 582.3,482.9 582.8,483.77 583.3,484.82 583.8,486.02 584.3,487.37 584.8,488.84 585.3,490.42 585.8,492.08 586.3,493.8 586.8,495.56 587.3,497.33 587.8,499.09 588.3,500.81 588.8,502.48 589.3,504.06 589.8,505.53 590.3,506.88 590.8,508.09 591.3,509.13 591.8,510 592.3,510.67" fill="none" stroke="#000" stroke-width="1.6" stroke-linejoin="round"/>
<line x1="617.2" y1="459.2" x2="655.9" y2="459.2" stroke="#000" stroke-width="1" />
<line x1="692.3" y1="459.2" x2="730.7" y2="459.2" stroke="#000" stroke-width="1" />
<text x="658.7" y="462.4" font-size="9.2" fill="#000" font-family="Liberation Sans, sans-serif" textLength="31.3" lengthAdjust="spacingAndGlyphs" stroke="#000" stroke-width="0.3" >LFO EG</text>
<polygon points="624.2,514.2 631.2,474.9 624.2,474.9" fill="rgba(158,158,170,0.95)" />
<line x1="624.2" y1="465.7" x2="624.2" y2="521.7" stroke="#000" stroke-width="2" />
<line x1="617.2" y1="474.9" x2="631.2" y2="474.9" stroke="#000" stroke-width="1.4" />
<line x1="617.2" y1="514.2" x2="631.2" y2="514.2" stroke="#000" stroke-width="1.4" />
<rect x="618.8" y="493.1" width="13.2" height="17.6" fill="rgba(0,0,0,0.35)" rx="4.5" filter="url(#blur)"/>
<rect x="617.6" y="491.5" width="13.2" height="17.6" fill="url(#hg)" rx="4.3" stroke="#333" stroke-width="1.2" />
<line x1="619.8" y1="500.3" x2="628.6" y2="500.3" stroke="#585c66" stroke-width="0.9" />
<text x="624.2" y="536.6" font-size="9.4" fill="#000" font-family="Liberation Sans, sans-serif" text-anchor="middle" stroke="#000" stroke-width="0.5" >D</text>
<polygon points="644.22,514.2 651.22,474.9 644.22,474.9" fill="rgba(158,158,170,0.95)" />
<line x1="644.22" y1="465.7" x2="644.22" y2="521.7" stroke="#000" stroke-width="2" />
<line x1="637.22" y1="474.9" x2="651.22" y2="474.9" stroke="#000" stroke-width="1.4" />
<line x1="637.22" y1="514.2" x2="651.22" y2="514.2" stroke="#000" stroke-width="1.4" />
<rect x="638.82" y="477.1" width="13.2" height="17.6" fill="rgba(0,0,0,0.35)" rx="4.5" filter="url(#blur)"/>
<rect x="637.62" y="475.5" width="13.2" height="17.6" fill="url(#hg)" rx="4.3" stroke="#333" stroke-width="1.2" />
<line x1="639.82" y1="484.3" x2="648.62" y2="484.3" stroke="#585c66" stroke-width="0.9" />
<text x="644.22" y="536.6" font-size="9.4" fill="#000" font-family="Liberation Sans, sans-serif" text-anchor="middle" stroke="#000" stroke-width="0.5" >A</text>
<polygon points="664.24,514.2 671.24,474.9 664.24,474.9" fill="rgba(158,158,170,0.95)" />
<line x1="664.24" y1="465.7" x2="664.24" y2="521.7" stroke="#000" stroke-width="2" />
<line x1="657.24" y1="474.9" x2="671.24" y2="474.9" stroke="#000" stroke-width="1.4" />
<line x1="657.24" y1="514.2" x2="671.24" y2="514.2" stroke="#000" stroke-width="1.4" />
<rect x="658.84" y="507.1" width="13.2" height="17.6" fill="rgba(0,0,0,0.35)" rx="4.5" filter="url(#blur)"/>
<rect x="657.64" y="505.5" width="13.2" height="17.6" fill="url(#hg)" rx="4.3" stroke="#333" stroke-width="1.2" />
<line x1="659.84" y1="514.3" x2="668.64" y2="514.3" stroke="#585c66" stroke-width="0.9" />
<text x="664.24" y="536.6" font-size="9.4" fill="#000" font-family="Liberation Sans, sans-serif" text-anchor="middle" stroke="#000" stroke-width="0.5" >H</text>
<polygon points="684.26,514.2 691.26,474.9 684.26,474.9" fill="rgba(158,158,170,0.95)" />
<line x1="684.26" y1="465.7" x2="684.26" y2="521.7" stroke="#000" stroke-width="2" />
<line x1="677.26" y1="474.9" x2="691.26" y2="474.9" stroke="#000" stroke-width="1.4" />
<line x1="677.26" y1="514.2" x2="691.26" y2="514.2" stroke="#000" stroke-width="1.4" />
<rect x="678.86" y="482.3" width="13.2" height="17.6" fill="rgba(0,0,0,0.35)" rx="4.5" filter="url(#blur)"/>
<rect x="677.66" y="480.7" width="13.2" height="17.6" fill="url(#hg)" rx="4.3" stroke="#333" stroke-width="1.2" />
<line x1="679.86" y1="489.5" x2="688.66" y2="489.5" stroke="#585c66" stroke-width="0.9" />
<text x="684.26" y="536.6" font-size="9.4" fill="#000" font-family="Liberation Sans, sans-serif" text-anchor="middle" stroke="#000" stroke-width="0.5" >D</text>
<polygon points="704.28,514.2 711.28,474.9 704.28,474.9" fill="rgba(158,158,170,0.95)" />
<line x1="704.28" y1="465.7" x2="704.28" y2="521.7" stroke="#000" stroke-width="2" />
<line x1="697.28" y1="474.9" x2="711.28" y2="474.9" stroke="#000" stroke-width="1.4" />
<line x1="697.28" y1="514.2" x2="711.28" y2="514.2" stroke="#000" stroke-width="1.4" />
<rect x="698.88" y="467.8" width="13.2" height="17.6" fill="rgba(0,0,0,0.35)" rx="4.5" filter="url(#blur)"/>
<rect x="697.68" y="466.2" width="13.2" height="17.6" fill="url(#hg)" rx="4.3" stroke="#333" stroke-width="1.2" />
<line x1="699.88" y1="475" x2="708.68" y2="475" stroke="#585c66" stroke-width="0.9" />
<text x="704.28" y="536.6" font-size="9.4" fill="#000" font-family="Liberation Sans, sans-serif" text-anchor="middle" stroke="#000" stroke-width="0.5" >S</text>
<polygon points="724.3,514.2 731.3,474.9 724.3,474.9" fill="rgba(158,158,170,0.95)" />
<line x1="724.3" y1="465.7" x2="724.3" y2="521.7" stroke="#000" stroke-width="2" />
<line x1="717.3" y1="474.9" x2="731.3" y2="474.9" stroke="#000" stroke-width="1.4" />
<line x1="717.3" y1="514.2" x2="731.3" y2="514.2" stroke="#000" stroke-width="1.4" />
<rect x="718.9" y="467.8" width="13.2" height="17.6" fill="rgba(0,0,0,0.35)" rx="4.5" filter="url(#blur)"/>
<rect x="717.7" y="466.2" width="13.2" height="17.6" fill="url(#hg)" rx="4.3" stroke="#333" stroke-width="1.2" />
<line x1="719.9" y1="475" x2="728.7" y2="475" stroke="#585c66" stroke-width="0.9" />
<text x="724.3" y="536.6" font-size="9.4" fill="#000" font-family="Liberation Sans, sans-serif" text-anchor="middle" stroke="#000" stroke-width="0.5" >R</text>
</svg>
</body></html>
